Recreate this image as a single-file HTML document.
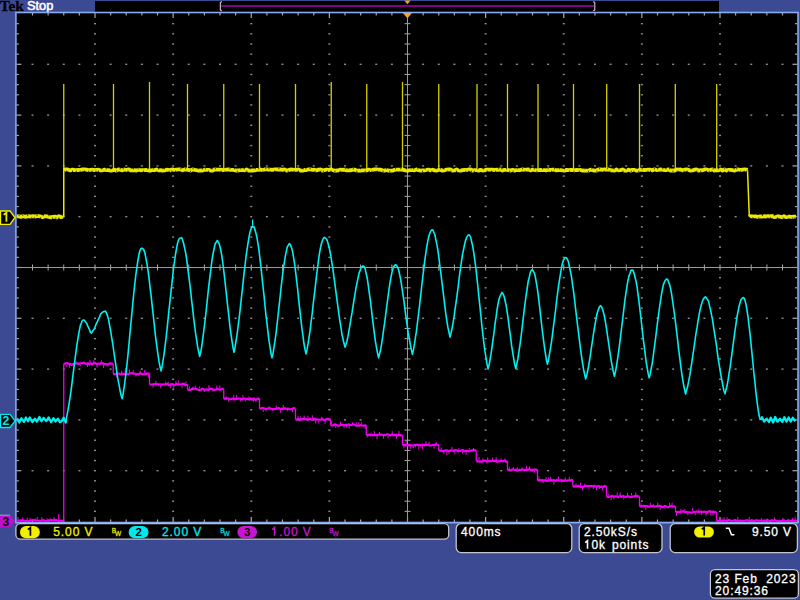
<!DOCTYPE html>
<html><head><meta charset="utf-8"><style>
html,body{margin:0;padding:0;width:800px;height:600px;overflow:hidden;background:#3c4a94;}
body{position:relative;font-family:"Liberation Sans",sans-serif;}
</style></head><body>
<svg width="800" height="600" viewBox="0 0 800 600" style="position:absolute;left:0;top:0">
<rect width="800" height="600" fill="#3c4a94"/>
<!-- top bar -->
<rect x="95" y="1" width="624" height="12" fill="#000"/>
<text x="-0.3" y="11.2" font-family="Liberation Serif" font-weight="bold" font-size="15.2" fill="#000" stroke="#000" stroke-width="0.3">Tek</text>
<text x="27" y="10.3" font-family="Liberation Sans" font-size="12.8" fill="#fff" stroke="#fff" stroke-width="0.55">Stop</text>
<rect x="221" y="5" width="373" height="2" fill="#800088"/>
<path d="M221.8 1.5 L220.3 2.5 L220.3 10 L221.8 11" fill="none" stroke="#d8c8d0" stroke-width="1.1"/>
<path d="M593.3 1.5 L594.8 2.5 L594.8 10 L593.3 11" fill="none" stroke="#d8c8d0" stroke-width="1.1"/>
<path d="M404.3 0.5 L410.5 0.5 L407.4 4.2 Z" fill="#f5a623"/>
<!-- graticule -->
<rect x="15.9" y="12.5" width="782.1" height="510" fill="#000" stroke="#88aaee" stroke-width="1.6"/>
<g fill="#8c8c8c"><rect x="94" y="22.96" width="2" height="1.4"/><rect x="94" y="33.12" width="2" height="1.4"/><rect x="94" y="43.28" width="2" height="1.4"/><rect x="94" y="53.44" width="2" height="1.4"/><rect x="94" y="63.6" width="2" height="1.4"/><rect x="94" y="73.76" width="2" height="1.4"/><rect x="94" y="83.92" width="2" height="1.4"/><rect x="94" y="94.08" width="2" height="1.4"/><rect x="94" y="104.24" width="2" height="1.4"/><rect x="94" y="114.4" width="2" height="1.4"/><rect x="94" y="124.56" width="2" height="1.4"/><rect x="94" y="134.72" width="2" height="1.4"/><rect x="94" y="144.88" width="2" height="1.4"/><rect x="94" y="155.04" width="2" height="1.4"/><rect x="94" y="165.2" width="2" height="1.4"/><rect x="94" y="175.36" width="2" height="1.4"/><rect x="94" y="185.52" width="2" height="1.4"/><rect x="94" y="195.68" width="2" height="1.4"/><rect x="94" y="205.84" width="2" height="1.4"/><rect x="94" y="216" width="2" height="1.4"/><rect x="94" y="226.16" width="2" height="1.4"/><rect x="94" y="236.32" width="2" height="1.4"/><rect x="94" y="246.48" width="2" height="1.4"/><rect x="94" y="256.64" width="2" height="1.4"/><rect x="94" y="266.8" width="2" height="1.4"/><rect x="94" y="276.96" width="2" height="1.4"/><rect x="94" y="287.12" width="2" height="1.4"/><rect x="94" y="297.28" width="2" height="1.4"/><rect x="94" y="307.44" width="2" height="1.4"/><rect x="94" y="317.6" width="2" height="1.4"/><rect x="94" y="327.76" width="2" height="1.4"/><rect x="94" y="337.92" width="2" height="1.4"/><rect x="94" y="348.08" width="2" height="1.4"/><rect x="94" y="358.24" width="2" height="1.4"/><rect x="94" y="368.4" width="2" height="1.4"/><rect x="94" y="378.56" width="2" height="1.4"/><rect x="94" y="388.72" width="2" height="1.4"/><rect x="94" y="398.88" width="2" height="1.4"/><rect x="94" y="409.04" width="2" height="1.4"/><rect x="94" y="419.2" width="2" height="1.4"/><rect x="94" y="429.36" width="2" height="1.4"/><rect x="94" y="439.52" width="2" height="1.4"/><rect x="94" y="449.68" width="2" height="1.4"/><rect x="94" y="459.84" width="2" height="1.4"/><rect x="94" y="470" width="2" height="1.4"/><rect x="94" y="480.16" width="2" height="1.4"/><rect x="94" y="490.32" width="2" height="1.4"/><rect x="94" y="500.48" width="2" height="1.4"/><rect x="94" y="510.64" width="2" height="1.4"/><rect x="172.12" y="22.96" width="2" height="1.4"/><rect x="172.12" y="33.12" width="2" height="1.4"/><rect x="172.12" y="43.28" width="2" height="1.4"/><rect x="172.12" y="53.44" width="2" height="1.4"/><rect x="172.12" y="63.6" width="2" height="1.4"/><rect x="172.12" y="73.76" width="2" height="1.4"/><rect x="172.12" y="83.92" width="2" height="1.4"/><rect x="172.12" y="94.08" width="2" height="1.4"/><rect x="172.12" y="104.24" width="2" height="1.4"/><rect x="172.12" y="114.4" width="2" height="1.4"/><rect x="172.12" y="124.56" width="2" height="1.4"/><rect x="172.12" y="134.72" width="2" height="1.4"/><rect x="172.12" y="144.88" width="2" height="1.4"/><rect x="172.12" y="155.04" width="2" height="1.4"/><rect x="172.12" y="165.2" width="2" height="1.4"/><rect x="172.12" y="175.36" width="2" height="1.4"/><rect x="172.12" y="185.52" width="2" height="1.4"/><rect x="172.12" y="195.68" width="2" height="1.4"/><rect x="172.12" y="205.84" width="2" height="1.4"/><rect x="172.12" y="216" width="2" height="1.4"/><rect x="172.12" y="226.16" width="2" height="1.4"/><rect x="172.12" y="236.32" width="2" height="1.4"/><rect x="172.12" y="246.48" width="2" height="1.4"/><rect x="172.12" y="256.64" width="2" height="1.4"/><rect x="172.12" y="266.8" width="2" height="1.4"/><rect x="172.12" y="276.96" width="2" height="1.4"/><rect x="172.12" y="287.12" width="2" height="1.4"/><rect x="172.12" y="297.28" width="2" height="1.4"/><rect x="172.12" y="307.44" width="2" height="1.4"/><rect x="172.12" y="317.6" width="2" height="1.4"/><rect x="172.12" y="327.76" width="2" height="1.4"/><rect x="172.12" y="337.92" width="2" height="1.4"/><rect x="172.12" y="348.08" width="2" height="1.4"/><rect x="172.12" y="358.24" width="2" height="1.4"/><rect x="172.12" y="368.4" width="2" height="1.4"/><rect x="172.12" y="378.56" width="2" height="1.4"/><rect x="172.12" y="388.72" width="2" height="1.4"/><rect x="172.12" y="398.88" width="2" height="1.4"/><rect x="172.12" y="409.04" width="2" height="1.4"/><rect x="172.12" y="419.2" width="2" height="1.4"/><rect x="172.12" y="429.36" width="2" height="1.4"/><rect x="172.12" y="439.52" width="2" height="1.4"/><rect x="172.12" y="449.68" width="2" height="1.4"/><rect x="172.12" y="459.84" width="2" height="1.4"/><rect x="172.12" y="470" width="2" height="1.4"/><rect x="172.12" y="480.16" width="2" height="1.4"/><rect x="172.12" y="490.32" width="2" height="1.4"/><rect x="172.12" y="500.48" width="2" height="1.4"/><rect x="172.12" y="510.64" width="2" height="1.4"/><rect x="250.25" y="22.96" width="2" height="1.4"/><rect x="250.25" y="33.12" width="2" height="1.4"/><rect x="250.25" y="43.28" width="2" height="1.4"/><rect x="250.25" y="53.44" width="2" height="1.4"/><rect x="250.25" y="63.6" width="2" height="1.4"/><rect x="250.25" y="73.76" width="2" height="1.4"/><rect x="250.25" y="83.92" width="2" height="1.4"/><rect x="250.25" y="94.08" width="2" height="1.4"/><rect x="250.25" y="104.24" width="2" height="1.4"/><rect x="250.25" y="114.4" width="2" height="1.4"/><rect x="250.25" y="124.56" width="2" height="1.4"/><rect x="250.25" y="134.72" width="2" height="1.4"/><rect x="250.25" y="144.88" width="2" height="1.4"/><rect x="250.25" y="155.04" width="2" height="1.4"/><rect x="250.25" y="165.2" width="2" height="1.4"/><rect x="250.25" y="175.36" width="2" height="1.4"/><rect x="250.25" y="185.52" width="2" height="1.4"/><rect x="250.25" y="195.68" width="2" height="1.4"/><rect x="250.25" y="205.84" width="2" height="1.4"/><rect x="250.25" y="216" width="2" height="1.4"/><rect x="250.25" y="226.16" width="2" height="1.4"/><rect x="250.25" y="236.32" width="2" height="1.4"/><rect x="250.25" y="246.48" width="2" height="1.4"/><rect x="250.25" y="256.64" width="2" height="1.4"/><rect x="250.25" y="266.8" width="2" height="1.4"/><rect x="250.25" y="276.96" width="2" height="1.4"/><rect x="250.25" y="287.12" width="2" height="1.4"/><rect x="250.25" y="297.28" width="2" height="1.4"/><rect x="250.25" y="307.44" width="2" height="1.4"/><rect x="250.25" y="317.6" width="2" height="1.4"/><rect x="250.25" y="327.76" width="2" height="1.4"/><rect x="250.25" y="337.92" width="2" height="1.4"/><rect x="250.25" y="348.08" width="2" height="1.4"/><rect x="250.25" y="358.24" width="2" height="1.4"/><rect x="250.25" y="368.4" width="2" height="1.4"/><rect x="250.25" y="378.56" width="2" height="1.4"/><rect x="250.25" y="388.72" width="2" height="1.4"/><rect x="250.25" y="398.88" width="2" height="1.4"/><rect x="250.25" y="409.04" width="2" height="1.4"/><rect x="250.25" y="419.2" width="2" height="1.4"/><rect x="250.25" y="429.36" width="2" height="1.4"/><rect x="250.25" y="439.52" width="2" height="1.4"/><rect x="250.25" y="449.68" width="2" height="1.4"/><rect x="250.25" y="459.84" width="2" height="1.4"/><rect x="250.25" y="470" width="2" height="1.4"/><rect x="250.25" y="480.16" width="2" height="1.4"/><rect x="250.25" y="490.32" width="2" height="1.4"/><rect x="250.25" y="500.48" width="2" height="1.4"/><rect x="250.25" y="510.64" width="2" height="1.4"/><rect x="328.38" y="22.96" width="2" height="1.4"/><rect x="328.38" y="33.12" width="2" height="1.4"/><rect x="328.38" y="43.28" width="2" height="1.4"/><rect x="328.38" y="53.44" width="2" height="1.4"/><rect x="328.38" y="63.6" width="2" height="1.4"/><rect x="328.38" y="73.76" width="2" height="1.4"/><rect x="328.38" y="83.92" width="2" height="1.4"/><rect x="328.38" y="94.08" width="2" height="1.4"/><rect x="328.38" y="104.24" width="2" height="1.4"/><rect x="328.38" y="114.4" width="2" height="1.4"/><rect x="328.38" y="124.56" width="2" height="1.4"/><rect x="328.38" y="134.72" width="2" height="1.4"/><rect x="328.38" y="144.88" width="2" height="1.4"/><rect x="328.38" y="155.04" width="2" height="1.4"/><rect x="328.38" y="165.2" width="2" height="1.4"/><rect x="328.38" y="175.36" width="2" height="1.4"/><rect x="328.38" y="185.52" width="2" height="1.4"/><rect x="328.38" y="195.68" width="2" height="1.4"/><rect x="328.38" y="205.84" width="2" height="1.4"/><rect x="328.38" y="216" width="2" height="1.4"/><rect x="328.38" y="226.16" width="2" height="1.4"/><rect x="328.38" y="236.32" width="2" height="1.4"/><rect x="328.38" y="246.48" width="2" height="1.4"/><rect x="328.38" y="256.64" width="2" height="1.4"/><rect x="328.38" y="266.8" width="2" height="1.4"/><rect x="328.38" y="276.96" width="2" height="1.4"/><rect x="328.38" y="287.12" width="2" height="1.4"/><rect x="328.38" y="297.28" width="2" height="1.4"/><rect x="328.38" y="307.44" width="2" height="1.4"/><rect x="328.38" y="317.6" width="2" height="1.4"/><rect x="328.38" y="327.76" width="2" height="1.4"/><rect x="328.38" y="337.92" width="2" height="1.4"/><rect x="328.38" y="348.08" width="2" height="1.4"/><rect x="328.38" y="358.24" width="2" height="1.4"/><rect x="328.38" y="368.4" width="2" height="1.4"/><rect x="328.38" y="378.56" width="2" height="1.4"/><rect x="328.38" y="388.72" width="2" height="1.4"/><rect x="328.38" y="398.88" width="2" height="1.4"/><rect x="328.38" y="409.04" width="2" height="1.4"/><rect x="328.38" y="419.2" width="2" height="1.4"/><rect x="328.38" y="429.36" width="2" height="1.4"/><rect x="328.38" y="439.52" width="2" height="1.4"/><rect x="328.38" y="449.68" width="2" height="1.4"/><rect x="328.38" y="459.84" width="2" height="1.4"/><rect x="328.38" y="470" width="2" height="1.4"/><rect x="328.38" y="480.16" width="2" height="1.4"/><rect x="328.38" y="490.32" width="2" height="1.4"/><rect x="328.38" y="500.48" width="2" height="1.4"/><rect x="328.38" y="510.64" width="2" height="1.4"/><rect x="484.62" y="22.96" width="2" height="1.4"/><rect x="484.62" y="33.12" width="2" height="1.4"/><rect x="484.62" y="43.28" width="2" height="1.4"/><rect x="484.62" y="53.44" width="2" height="1.4"/><rect x="484.62" y="63.6" width="2" height="1.4"/><rect x="484.62" y="73.76" width="2" height="1.4"/><rect x="484.62" y="83.92" width="2" height="1.4"/><rect x="484.62" y="94.08" width="2" height="1.4"/><rect x="484.62" y="104.24" width="2" height="1.4"/><rect x="484.62" y="114.4" width="2" height="1.4"/><rect x="484.62" y="124.56" width="2" height="1.4"/><rect x="484.62" y="134.72" width="2" height="1.4"/><rect x="484.62" y="144.88" width="2" height="1.4"/><rect x="484.62" y="155.04" width="2" height="1.4"/><rect x="484.62" y="165.2" width="2" height="1.4"/><rect x="484.62" y="175.36" width="2" height="1.4"/><rect x="484.62" y="185.52" width="2" height="1.4"/><rect x="484.62" y="195.68" width="2" height="1.4"/><rect x="484.62" y="205.84" width="2" height="1.4"/><rect x="484.62" y="216" width="2" height="1.4"/><rect x="484.62" y="226.16" width="2" height="1.4"/><rect x="484.62" y="236.32" width="2" height="1.4"/><rect x="484.62" y="246.48" width="2" height="1.4"/><rect x="484.62" y="256.64" width="2" height="1.4"/><rect x="484.62" y="266.8" width="2" height="1.4"/><rect x="484.62" y="276.96" width="2" height="1.4"/><rect x="484.62" y="287.12" width="2" height="1.4"/><rect x="484.62" y="297.28" width="2" height="1.4"/><rect x="484.62" y="307.44" width="2" height="1.4"/><rect x="484.62" y="317.6" width="2" height="1.4"/><rect x="484.62" y="327.76" width="2" height="1.4"/><rect x="484.62" y="337.92" width="2" height="1.4"/><rect x="484.62" y="348.08" width="2" height="1.4"/><rect x="484.62" y="358.24" width="2" height="1.4"/><rect x="484.62" y="368.4" width="2" height="1.4"/><rect x="484.62" y="378.56" width="2" height="1.4"/><rect x="484.62" y="388.72" width="2" height="1.4"/><rect x="484.62" y="398.88" width="2" height="1.4"/><rect x="484.62" y="409.04" width="2" height="1.4"/><rect x="484.62" y="419.2" width="2" height="1.4"/><rect x="484.62" y="429.36" width="2" height="1.4"/><rect x="484.62" y="439.52" width="2" height="1.4"/><rect x="484.62" y="449.68" width="2" height="1.4"/><rect x="484.62" y="459.84" width="2" height="1.4"/><rect x="484.62" y="470" width="2" height="1.4"/><rect x="484.62" y="480.16" width="2" height="1.4"/><rect x="484.62" y="490.32" width="2" height="1.4"/><rect x="484.62" y="500.48" width="2" height="1.4"/><rect x="484.62" y="510.64" width="2" height="1.4"/><rect x="562.75" y="22.96" width="2" height="1.4"/><rect x="562.75" y="33.12" width="2" height="1.4"/><rect x="562.75" y="43.28" width="2" height="1.4"/><rect x="562.75" y="53.44" width="2" height="1.4"/><rect x="562.75" y="63.6" width="2" height="1.4"/><rect x="562.75" y="73.76" width="2" height="1.4"/><rect x="562.75" y="83.92" width="2" height="1.4"/><rect x="562.75" y="94.08" width="2" height="1.4"/><rect x="562.75" y="104.24" width="2" height="1.4"/><rect x="562.75" y="114.4" width="2" height="1.4"/><rect x="562.75" y="124.56" width="2" height="1.4"/><rect x="562.75" y="134.72" width="2" height="1.4"/><rect x="562.75" y="144.88" width="2" height="1.4"/><rect x="562.75" y="155.04" width="2" height="1.4"/><rect x="562.75" y="165.2" width="2" height="1.4"/><rect x="562.75" y="175.36" width="2" height="1.4"/><rect x="562.75" y="185.52" width="2" height="1.4"/><rect x="562.75" y="195.68" width="2" height="1.4"/><rect x="562.75" y="205.84" width="2" height="1.4"/><rect x="562.75" y="216" width="2" height="1.4"/><rect x="562.75" y="226.16" width="2" height="1.4"/><rect x="562.75" y="236.32" width="2" height="1.4"/><rect x="562.75" y="246.48" width="2" height="1.4"/><rect x="562.75" y="256.64" width="2" height="1.4"/><rect x="562.75" y="266.8" width="2" height="1.4"/><rect x="562.75" y="276.96" width="2" height="1.4"/><rect x="562.75" y="287.12" width="2" height="1.4"/><rect x="562.75" y="297.28" width="2" height="1.4"/><rect x="562.75" y="307.44" width="2" height="1.4"/><rect x="562.75" y="317.6" width="2" height="1.4"/><rect x="562.75" y="327.76" width="2" height="1.4"/><rect x="562.75" y="337.92" width="2" height="1.4"/><rect x="562.75" y="348.08" width="2" height="1.4"/><rect x="562.75" y="358.24" width="2" height="1.4"/><rect x="562.75" y="368.4" width="2" height="1.4"/><rect x="562.75" y="378.56" width="2" height="1.4"/><rect x="562.75" y="388.72" width="2" height="1.4"/><rect x="562.75" y="398.88" width="2" height="1.4"/><rect x="562.75" y="409.04" width="2" height="1.4"/><rect x="562.75" y="419.2" width="2" height="1.4"/><rect x="562.75" y="429.36" width="2" height="1.4"/><rect x="562.75" y="439.52" width="2" height="1.4"/><rect x="562.75" y="449.68" width="2" height="1.4"/><rect x="562.75" y="459.84" width="2" height="1.4"/><rect x="562.75" y="470" width="2" height="1.4"/><rect x="562.75" y="480.16" width="2" height="1.4"/><rect x="562.75" y="490.32" width="2" height="1.4"/><rect x="562.75" y="500.48" width="2" height="1.4"/><rect x="562.75" y="510.64" width="2" height="1.4"/><rect x="640.88" y="22.96" width="2" height="1.4"/><rect x="640.88" y="33.12" width="2" height="1.4"/><rect x="640.88" y="43.28" width="2" height="1.4"/><rect x="640.88" y="53.44" width="2" height="1.4"/><rect x="640.88" y="63.6" width="2" height="1.4"/><rect x="640.88" y="73.76" width="2" height="1.4"/><rect x="640.88" y="83.92" width="2" height="1.4"/><rect x="640.88" y="94.08" width="2" height="1.4"/><rect x="640.88" y="104.24" width="2" height="1.4"/><rect x="640.88" y="114.4" width="2" height="1.4"/><rect x="640.88" y="124.56" width="2" height="1.4"/><rect x="640.88" y="134.72" width="2" height="1.4"/><rect x="640.88" y="144.88" width="2" height="1.4"/><rect x="640.88" y="155.04" width="2" height="1.4"/><rect x="640.88" y="165.2" width="2" height="1.4"/><rect x="640.88" y="175.36" width="2" height="1.4"/><rect x="640.88" y="185.52" width="2" height="1.4"/><rect x="640.88" y="195.68" width="2" height="1.4"/><rect x="640.88" y="205.84" width="2" height="1.4"/><rect x="640.88" y="216" width="2" height="1.4"/><rect x="640.88" y="226.16" width="2" height="1.4"/><rect x="640.88" y="236.32" width="2" height="1.4"/><rect x="640.88" y="246.48" width="2" height="1.4"/><rect x="640.88" y="256.64" width="2" height="1.4"/><rect x="640.88" y="266.8" width="2" height="1.4"/><rect x="640.88" y="276.96" width="2" height="1.4"/><rect x="640.88" y="287.12" width="2" height="1.4"/><rect x="640.88" y="297.28" width="2" height="1.4"/><rect x="640.88" y="307.44" width="2" height="1.4"/><rect x="640.88" y="317.6" width="2" height="1.4"/><rect x="640.88" y="327.76" width="2" height="1.4"/><rect x="640.88" y="337.92" width="2" height="1.4"/><rect x="640.88" y="348.08" width="2" height="1.4"/><rect x="640.88" y="358.24" width="2" height="1.4"/><rect x="640.88" y="368.4" width="2" height="1.4"/><rect x="640.88" y="378.56" width="2" height="1.4"/><rect x="640.88" y="388.72" width="2" height="1.4"/><rect x="640.88" y="398.88" width="2" height="1.4"/><rect x="640.88" y="409.04" width="2" height="1.4"/><rect x="640.88" y="419.2" width="2" height="1.4"/><rect x="640.88" y="429.36" width="2" height="1.4"/><rect x="640.88" y="439.52" width="2" height="1.4"/><rect x="640.88" y="449.68" width="2" height="1.4"/><rect x="640.88" y="459.84" width="2" height="1.4"/><rect x="640.88" y="470" width="2" height="1.4"/><rect x="640.88" y="480.16" width="2" height="1.4"/><rect x="640.88" y="490.32" width="2" height="1.4"/><rect x="640.88" y="500.48" width="2" height="1.4"/><rect x="640.88" y="510.64" width="2" height="1.4"/><rect x="719" y="22.96" width="2" height="1.4"/><rect x="719" y="33.12" width="2" height="1.4"/><rect x="719" y="43.28" width="2" height="1.4"/><rect x="719" y="53.44" width="2" height="1.4"/><rect x="719" y="63.6" width="2" height="1.4"/><rect x="719" y="73.76" width="2" height="1.4"/><rect x="719" y="83.92" width="2" height="1.4"/><rect x="719" y="94.08" width="2" height="1.4"/><rect x="719" y="104.24" width="2" height="1.4"/><rect x="719" y="114.4" width="2" height="1.4"/><rect x="719" y="124.56" width="2" height="1.4"/><rect x="719" y="134.72" width="2" height="1.4"/><rect x="719" y="144.88" width="2" height="1.4"/><rect x="719" y="155.04" width="2" height="1.4"/><rect x="719" y="165.2" width="2" height="1.4"/><rect x="719" y="175.36" width="2" height="1.4"/><rect x="719" y="185.52" width="2" height="1.4"/><rect x="719" y="195.68" width="2" height="1.4"/><rect x="719" y="205.84" width="2" height="1.4"/><rect x="719" y="216" width="2" height="1.4"/><rect x="719" y="226.16" width="2" height="1.4"/><rect x="719" y="236.32" width="2" height="1.4"/><rect x="719" y="246.48" width="2" height="1.4"/><rect x="719" y="256.64" width="2" height="1.4"/><rect x="719" y="266.8" width="2" height="1.4"/><rect x="719" y="276.96" width="2" height="1.4"/><rect x="719" y="287.12" width="2" height="1.4"/><rect x="719" y="297.28" width="2" height="1.4"/><rect x="719" y="307.44" width="2" height="1.4"/><rect x="719" y="317.6" width="2" height="1.4"/><rect x="719" y="327.76" width="2" height="1.4"/><rect x="719" y="337.92" width="2" height="1.4"/><rect x="719" y="348.08" width="2" height="1.4"/><rect x="719" y="358.24" width="2" height="1.4"/><rect x="719" y="368.4" width="2" height="1.4"/><rect x="719" y="378.56" width="2" height="1.4"/><rect x="719" y="388.72" width="2" height="1.4"/><rect x="719" y="398.88" width="2" height="1.4"/><rect x="719" y="409.04" width="2" height="1.4"/><rect x="719" y="419.2" width="2" height="1.4"/><rect x="719" y="429.36" width="2" height="1.4"/><rect x="719" y="439.52" width="2" height="1.4"/><rect x="719" y="449.68" width="2" height="1.4"/><rect x="719" y="459.84" width="2" height="1.4"/><rect x="719" y="470" width="2" height="1.4"/><rect x="719" y="480.16" width="2" height="1.4"/><rect x="719" y="490.32" width="2" height="1.4"/><rect x="719" y="500.48" width="2" height="1.4"/><rect x="719" y="510.64" width="2" height="1.4"/><rect x="31.5" y="63.6" width="2" height="1.4"/><rect x="47.12" y="63.6" width="2" height="1.4"/><rect x="62.75" y="63.6" width="2" height="1.4"/><rect x="78.38" y="63.6" width="2" height="1.4"/><rect x="109.62" y="63.6" width="2" height="1.4"/><rect x="125.25" y="63.6" width="2" height="1.4"/><rect x="140.88" y="63.6" width="2" height="1.4"/><rect x="156.5" y="63.6" width="2" height="1.4"/><rect x="187.75" y="63.6" width="2" height="1.4"/><rect x="203.38" y="63.6" width="2" height="1.4"/><rect x="219" y="63.6" width="2" height="1.4"/><rect x="234.62" y="63.6" width="2" height="1.4"/><rect x="265.88" y="63.6" width="2" height="1.4"/><rect x="281.5" y="63.6" width="2" height="1.4"/><rect x="297.12" y="63.6" width="2" height="1.4"/><rect x="312.75" y="63.6" width="2" height="1.4"/><rect x="344" y="63.6" width="2" height="1.4"/><rect x="359.62" y="63.6" width="2" height="1.4"/><rect x="375.25" y="63.6" width="2" height="1.4"/><rect x="390.88" y="63.6" width="2" height="1.4"/><rect x="422.12" y="63.6" width="2" height="1.4"/><rect x="437.75" y="63.6" width="2" height="1.4"/><rect x="453.38" y="63.6" width="2" height="1.4"/><rect x="469" y="63.6" width="2" height="1.4"/><rect x="500.25" y="63.6" width="2" height="1.4"/><rect x="515.88" y="63.6" width="2" height="1.4"/><rect x="531.5" y="63.6" width="2" height="1.4"/><rect x="547.12" y="63.6" width="2" height="1.4"/><rect x="578.38" y="63.6" width="2" height="1.4"/><rect x="594" y="63.6" width="2" height="1.4"/><rect x="609.62" y="63.6" width="2" height="1.4"/><rect x="625.25" y="63.6" width="2" height="1.4"/><rect x="656.5" y="63.6" width="2" height="1.4"/><rect x="672.12" y="63.6" width="2" height="1.4"/><rect x="687.75" y="63.6" width="2" height="1.4"/><rect x="703.38" y="63.6" width="2" height="1.4"/><rect x="734.62" y="63.6" width="2" height="1.4"/><rect x="750.25" y="63.6" width="2" height="1.4"/><rect x="765.88" y="63.6" width="2" height="1.4"/><rect x="781.5" y="63.6" width="2" height="1.4"/><rect x="31.5" y="114.4" width="2" height="1.4"/><rect x="47.12" y="114.4" width="2" height="1.4"/><rect x="62.75" y="114.4" width="2" height="1.4"/><rect x="78.38" y="114.4" width="2" height="1.4"/><rect x="109.62" y="114.4" width="2" height="1.4"/><rect x="125.25" y="114.4" width="2" height="1.4"/><rect x="140.88" y="114.4" width="2" height="1.4"/><rect x="156.5" y="114.4" width="2" height="1.4"/><rect x="187.75" y="114.4" width="2" height="1.4"/><rect x="203.38" y="114.4" width="2" height="1.4"/><rect x="219" y="114.4" width="2" height="1.4"/><rect x="234.62" y="114.4" width="2" height="1.4"/><rect x="265.88" y="114.4" width="2" height="1.4"/><rect x="281.5" y="114.4" width="2" height="1.4"/><rect x="297.12" y="114.4" width="2" height="1.4"/><rect x="312.75" y="114.4" width="2" height="1.4"/><rect x="344" y="114.4" width="2" height="1.4"/><rect x="359.62" y="114.4" width="2" height="1.4"/><rect x="375.25" y="114.4" width="2" height="1.4"/><rect x="390.88" y="114.4" width="2" height="1.4"/><rect x="422.12" y="114.4" width="2" height="1.4"/><rect x="437.75" y="114.4" width="2" height="1.4"/><rect x="453.38" y="114.4" width="2" height="1.4"/><rect x="469" y="114.4" width="2" height="1.4"/><rect x="500.25" y="114.4" width="2" height="1.4"/><rect x="515.88" y="114.4" width="2" height="1.4"/><rect x="531.5" y="114.4" width="2" height="1.4"/><rect x="547.12" y="114.4" width="2" height="1.4"/><rect x="578.38" y="114.4" width="2" height="1.4"/><rect x="594" y="114.4" width="2" height="1.4"/><rect x="609.62" y="114.4" width="2" height="1.4"/><rect x="625.25" y="114.4" width="2" height="1.4"/><rect x="656.5" y="114.4" width="2" height="1.4"/><rect x="672.12" y="114.4" width="2" height="1.4"/><rect x="687.75" y="114.4" width="2" height="1.4"/><rect x="703.38" y="114.4" width="2" height="1.4"/><rect x="734.62" y="114.4" width="2" height="1.4"/><rect x="750.25" y="114.4" width="2" height="1.4"/><rect x="765.88" y="114.4" width="2" height="1.4"/><rect x="781.5" y="114.4" width="2" height="1.4"/><rect x="31.5" y="165.2" width="2" height="1.4"/><rect x="47.12" y="165.2" width="2" height="1.4"/><rect x="62.75" y="165.2" width="2" height="1.4"/><rect x="78.38" y="165.2" width="2" height="1.4"/><rect x="109.62" y="165.2" width="2" height="1.4"/><rect x="125.25" y="165.2" width="2" height="1.4"/><rect x="140.88" y="165.2" width="2" height="1.4"/><rect x="156.5" y="165.2" width="2" height="1.4"/><rect x="187.75" y="165.2" width="2" height="1.4"/><rect x="203.38" y="165.2" width="2" height="1.4"/><rect x="219" y="165.2" width="2" height="1.4"/><rect x="234.62" y="165.2" width="2" height="1.4"/><rect x="265.88" y="165.2" width="2" height="1.4"/><rect x="281.5" y="165.2" width="2" height="1.4"/><rect x="297.12" y="165.2" width="2" height="1.4"/><rect x="312.75" y="165.2" width="2" height="1.4"/><rect x="344" y="165.2" width="2" height="1.4"/><rect x="359.62" y="165.2" width="2" height="1.4"/><rect x="375.25" y="165.2" width="2" height="1.4"/><rect x="390.88" y="165.2" width="2" height="1.4"/><rect x="422.12" y="165.2" width="2" height="1.4"/><rect x="437.75" y="165.2" width="2" height="1.4"/><rect x="453.38" y="165.2" width="2" height="1.4"/><rect x="469" y="165.2" width="2" height="1.4"/><rect x="500.25" y="165.2" width="2" height="1.4"/><rect x="515.88" y="165.2" width="2" height="1.4"/><rect x="531.5" y="165.2" width="2" height="1.4"/><rect x="547.12" y="165.2" width="2" height="1.4"/><rect x="578.38" y="165.2" width="2" height="1.4"/><rect x="594" y="165.2" width="2" height="1.4"/><rect x="609.62" y="165.2" width="2" height="1.4"/><rect x="625.25" y="165.2" width="2" height="1.4"/><rect x="656.5" y="165.2" width="2" height="1.4"/><rect x="672.12" y="165.2" width="2" height="1.4"/><rect x="687.75" y="165.2" width="2" height="1.4"/><rect x="703.38" y="165.2" width="2" height="1.4"/><rect x="734.62" y="165.2" width="2" height="1.4"/><rect x="750.25" y="165.2" width="2" height="1.4"/><rect x="765.88" y="165.2" width="2" height="1.4"/><rect x="781.5" y="165.2" width="2" height="1.4"/><rect x="31.5" y="216" width="2" height="1.4"/><rect x="47.12" y="216" width="2" height="1.4"/><rect x="62.75" y="216" width="2" height="1.4"/><rect x="78.38" y="216" width="2" height="1.4"/><rect x="109.62" y="216" width="2" height="1.4"/><rect x="125.25" y="216" width="2" height="1.4"/><rect x="140.88" y="216" width="2" height="1.4"/><rect x="156.5" y="216" width="2" height="1.4"/><rect x="187.75" y="216" width="2" height="1.4"/><rect x="203.38" y="216" width="2" height="1.4"/><rect x="219" y="216" width="2" height="1.4"/><rect x="234.62" y="216" width="2" height="1.4"/><rect x="265.88" y="216" width="2" height="1.4"/><rect x="281.5" y="216" width="2" height="1.4"/><rect x="297.12" y="216" width="2" height="1.4"/><rect x="312.75" y="216" width="2" height="1.4"/><rect x="344" y="216" width="2" height="1.4"/><rect x="359.62" y="216" width="2" height="1.4"/><rect x="375.25" y="216" width="2" height="1.4"/><rect x="390.88" y="216" width="2" height="1.4"/><rect x="422.12" y="216" width="2" height="1.4"/><rect x="437.75" y="216" width="2" height="1.4"/><rect x="453.38" y="216" width="2" height="1.4"/><rect x="469" y="216" width="2" height="1.4"/><rect x="500.25" y="216" width="2" height="1.4"/><rect x="515.88" y="216" width="2" height="1.4"/><rect x="531.5" y="216" width="2" height="1.4"/><rect x="547.12" y="216" width="2" height="1.4"/><rect x="578.38" y="216" width="2" height="1.4"/><rect x="594" y="216" width="2" height="1.4"/><rect x="609.62" y="216" width="2" height="1.4"/><rect x="625.25" y="216" width="2" height="1.4"/><rect x="656.5" y="216" width="2" height="1.4"/><rect x="672.12" y="216" width="2" height="1.4"/><rect x="687.75" y="216" width="2" height="1.4"/><rect x="703.38" y="216" width="2" height="1.4"/><rect x="734.62" y="216" width="2" height="1.4"/><rect x="750.25" y="216" width="2" height="1.4"/><rect x="765.88" y="216" width="2" height="1.4"/><rect x="781.5" y="216" width="2" height="1.4"/><rect x="31.5" y="317.6" width="2" height="1.4"/><rect x="47.12" y="317.6" width="2" height="1.4"/><rect x="62.75" y="317.6" width="2" height="1.4"/><rect x="78.38" y="317.6" width="2" height="1.4"/><rect x="109.62" y="317.6" width="2" height="1.4"/><rect x="125.25" y="317.6" width="2" height="1.4"/><rect x="140.88" y="317.6" width="2" height="1.4"/><rect x="156.5" y="317.6" width="2" height="1.4"/><rect x="187.75" y="317.6" width="2" height="1.4"/><rect x="203.38" y="317.6" width="2" height="1.4"/><rect x="219" y="317.6" width="2" height="1.4"/><rect x="234.62" y="317.6" width="2" height="1.4"/><rect x="265.88" y="317.6" width="2" height="1.4"/><rect x="281.5" y="317.6" width="2" height="1.4"/><rect x="297.12" y="317.6" width="2" height="1.4"/><rect x="312.75" y="317.6" width="2" height="1.4"/><rect x="344" y="317.6" width="2" height="1.4"/><rect x="359.62" y="317.6" width="2" height="1.4"/><rect x="375.25" y="317.6" width="2" height="1.4"/><rect x="390.88" y="317.6" width="2" height="1.4"/><rect x="422.12" y="317.6" width="2" height="1.4"/><rect x="437.75" y="317.6" width="2" height="1.4"/><rect x="453.38" y="317.6" width="2" height="1.4"/><rect x="469" y="317.6" width="2" height="1.4"/><rect x="500.25" y="317.6" width="2" height="1.4"/><rect x="515.88" y="317.6" width="2" height="1.4"/><rect x="531.5" y="317.6" width="2" height="1.4"/><rect x="547.12" y="317.6" width="2" height="1.4"/><rect x="578.38" y="317.6" width="2" height="1.4"/><rect x="594" y="317.6" width="2" height="1.4"/><rect x="609.62" y="317.6" width="2" height="1.4"/><rect x="625.25" y="317.6" width="2" height="1.4"/><rect x="656.5" y="317.6" width="2" height="1.4"/><rect x="672.12" y="317.6" width="2" height="1.4"/><rect x="687.75" y="317.6" width="2" height="1.4"/><rect x="703.38" y="317.6" width="2" height="1.4"/><rect x="734.62" y="317.6" width="2" height="1.4"/><rect x="750.25" y="317.6" width="2" height="1.4"/><rect x="765.88" y="317.6" width="2" height="1.4"/><rect x="781.5" y="317.6" width="2" height="1.4"/><rect x="31.5" y="368.4" width="2" height="1.4"/><rect x="47.12" y="368.4" width="2" height="1.4"/><rect x="62.75" y="368.4" width="2" height="1.4"/><rect x="78.38" y="368.4" width="2" height="1.4"/><rect x="109.62" y="368.4" width="2" height="1.4"/><rect x="125.25" y="368.4" width="2" height="1.4"/><rect x="140.88" y="368.4" width="2" height="1.4"/><rect x="156.5" y="368.4" width="2" height="1.4"/><rect x="187.75" y="368.4" width="2" height="1.4"/><rect x="203.38" y="368.4" width="2" height="1.4"/><rect x="219" y="368.4" width="2" height="1.4"/><rect x="234.62" y="368.4" width="2" height="1.4"/><rect x="265.88" y="368.4" width="2" height="1.4"/><rect x="281.5" y="368.4" width="2" height="1.4"/><rect x="297.12" y="368.4" width="2" height="1.4"/><rect x="312.75" y="368.4" width="2" height="1.4"/><rect x="344" y="368.4" width="2" height="1.4"/><rect x="359.62" y="368.4" width="2" height="1.4"/><rect x="375.25" y="368.4" width="2" height="1.4"/><rect x="390.88" y="368.4" width="2" height="1.4"/><rect x="422.12" y="368.4" width="2" height="1.4"/><rect x="437.75" y="368.4" width="2" height="1.4"/><rect x="453.38" y="368.4" width="2" height="1.4"/><rect x="469" y="368.4" width="2" height="1.4"/><rect x="500.25" y="368.4" width="2" height="1.4"/><rect x="515.88" y="368.4" width="2" height="1.4"/><rect x="531.5" y="368.4" width="2" height="1.4"/><rect x="547.12" y="368.4" width="2" height="1.4"/><rect x="578.38" y="368.4" width="2" height="1.4"/><rect x="594" y="368.4" width="2" height="1.4"/><rect x="609.62" y="368.4" width="2" height="1.4"/><rect x="625.25" y="368.4" width="2" height="1.4"/><rect x="656.5" y="368.4" width="2" height="1.4"/><rect x="672.12" y="368.4" width="2" height="1.4"/><rect x="687.75" y="368.4" width="2" height="1.4"/><rect x="703.38" y="368.4" width="2" height="1.4"/><rect x="734.62" y="368.4" width="2" height="1.4"/><rect x="750.25" y="368.4" width="2" height="1.4"/><rect x="765.88" y="368.4" width="2" height="1.4"/><rect x="781.5" y="368.4" width="2" height="1.4"/><rect x="31.5" y="419.2" width="2" height="1.4"/><rect x="47.12" y="419.2" width="2" height="1.4"/><rect x="62.75" y="419.2" width="2" height="1.4"/><rect x="78.38" y="419.2" width="2" height="1.4"/><rect x="109.62" y="419.2" width="2" height="1.4"/><rect x="125.25" y="419.2" width="2" height="1.4"/><rect x="140.88" y="419.2" width="2" height="1.4"/><rect x="156.5" y="419.2" width="2" height="1.4"/><rect x="187.75" y="419.2" width="2" height="1.4"/><rect x="203.38" y="419.2" width="2" height="1.4"/><rect x="219" y="419.2" width="2" height="1.4"/><rect x="234.62" y="419.2" width="2" height="1.4"/><rect x="265.88" y="419.2" width="2" height="1.4"/><rect x="281.5" y="419.2" width="2" height="1.4"/><rect x="297.12" y="419.2" width="2" height="1.4"/><rect x="312.75" y="419.2" width="2" height="1.4"/><rect x="344" y="419.2" width="2" height="1.4"/><rect x="359.62" y="419.2" width="2" height="1.4"/><rect x="375.25" y="419.2" width="2" height="1.4"/><rect x="390.88" y="419.2" width="2" height="1.4"/><rect x="422.12" y="419.2" width="2" height="1.4"/><rect x="437.75" y="419.2" width="2" height="1.4"/><rect x="453.38" y="419.2" width="2" height="1.4"/><rect x="469" y="419.2" width="2" height="1.4"/><rect x="500.25" y="419.2" width="2" height="1.4"/><rect x="515.88" y="419.2" width="2" height="1.4"/><rect x="531.5" y="419.2" width="2" height="1.4"/><rect x="547.12" y="419.2" width="2" height="1.4"/><rect x="578.38" y="419.2" width="2" height="1.4"/><rect x="594" y="419.2" width="2" height="1.4"/><rect x="609.62" y="419.2" width="2" height="1.4"/><rect x="625.25" y="419.2" width="2" height="1.4"/><rect x="656.5" y="419.2" width="2" height="1.4"/><rect x="672.12" y="419.2" width="2" height="1.4"/><rect x="687.75" y="419.2" width="2" height="1.4"/><rect x="703.38" y="419.2" width="2" height="1.4"/><rect x="734.62" y="419.2" width="2" height="1.4"/><rect x="750.25" y="419.2" width="2" height="1.4"/><rect x="765.88" y="419.2" width="2" height="1.4"/><rect x="781.5" y="419.2" width="2" height="1.4"/><rect x="31.5" y="470" width="2" height="1.4"/><rect x="47.12" y="470" width="2" height="1.4"/><rect x="62.75" y="470" width="2" height="1.4"/><rect x="78.38" y="470" width="2" height="1.4"/><rect x="109.62" y="470" width="2" height="1.4"/><rect x="125.25" y="470" width="2" height="1.4"/><rect x="140.88" y="470" width="2" height="1.4"/><rect x="156.5" y="470" width="2" height="1.4"/><rect x="187.75" y="470" width="2" height="1.4"/><rect x="203.38" y="470" width="2" height="1.4"/><rect x="219" y="470" width="2" height="1.4"/><rect x="234.62" y="470" width="2" height="1.4"/><rect x="265.88" y="470" width="2" height="1.4"/><rect x="281.5" y="470" width="2" height="1.4"/><rect x="297.12" y="470" width="2" height="1.4"/><rect x="312.75" y="470" width="2" height="1.4"/><rect x="344" y="470" width="2" height="1.4"/><rect x="359.62" y="470" width="2" height="1.4"/><rect x="375.25" y="470" width="2" height="1.4"/><rect x="390.88" y="470" width="2" height="1.4"/><rect x="422.12" y="470" width="2" height="1.4"/><rect x="437.75" y="470" width="2" height="1.4"/><rect x="453.38" y="470" width="2" height="1.4"/><rect x="469" y="470" width="2" height="1.4"/><rect x="500.25" y="470" width="2" height="1.4"/><rect x="515.88" y="470" width="2" height="1.4"/><rect x="531.5" y="470" width="2" height="1.4"/><rect x="547.12" y="470" width="2" height="1.4"/><rect x="578.38" y="470" width="2" height="1.4"/><rect x="594" y="470" width="2" height="1.4"/><rect x="609.62" y="470" width="2" height="1.4"/><rect x="625.25" y="470" width="2" height="1.4"/><rect x="656.5" y="470" width="2" height="1.4"/><rect x="672.12" y="470" width="2" height="1.4"/><rect x="687.75" y="470" width="2" height="1.4"/><rect x="703.38" y="470" width="2" height="1.4"/><rect x="734.62" y="470" width="2" height="1.4"/><rect x="750.25" y="470" width="2" height="1.4"/><rect x="765.88" y="470" width="2" height="1.4"/><rect x="781.5" y="470" width="2" height="1.4"/></g>
<g fill="#a8a8a8"><rect x="32" y="264.5" width="1" height="6"/><rect x="47.62" y="264.5" width="1" height="6"/><rect x="63.25" y="264.5" width="1" height="6"/><rect x="78.88" y="264.5" width="1" height="6"/><rect x="94.5" y="264.5" width="1" height="6"/><rect x="110.12" y="264.5" width="1" height="6"/><rect x="125.75" y="264.5" width="1" height="6"/><rect x="141.38" y="264.5" width="1" height="6"/><rect x="157" y="264.5" width="1" height="6"/><rect x="172.62" y="264.5" width="1" height="6"/><rect x="188.25" y="264.5" width="1" height="6"/><rect x="203.88" y="264.5" width="1" height="6"/><rect x="219.5" y="264.5" width="1" height="6"/><rect x="235.12" y="264.5" width="1" height="6"/><rect x="250.75" y="264.5" width="1" height="6"/><rect x="266.38" y="264.5" width="1" height="6"/><rect x="282" y="264.5" width="1" height="6"/><rect x="297.62" y="264.5" width="1" height="6"/><rect x="313.25" y="264.5" width="1" height="6"/><rect x="328.88" y="264.5" width="1" height="6"/><rect x="344.5" y="264.5" width="1" height="6"/><rect x="360.12" y="264.5" width="1" height="6"/><rect x="375.75" y="264.5" width="1" height="6"/><rect x="391.38" y="264.5" width="1" height="6"/><rect x="407" y="264.5" width="1" height="6"/><rect x="422.62" y="264.5" width="1" height="6"/><rect x="438.25" y="264.5" width="1" height="6"/><rect x="453.88" y="264.5" width="1" height="6"/><rect x="469.5" y="264.5" width="1" height="6"/><rect x="485.12" y="264.5" width="1" height="6"/><rect x="500.75" y="264.5" width="1" height="6"/><rect x="516.38" y="264.5" width="1" height="6"/><rect x="532" y="264.5" width="1" height="6"/><rect x="547.62" y="264.5" width="1" height="6"/><rect x="563.25" y="264.5" width="1" height="6"/><rect x="578.88" y="264.5" width="1" height="6"/><rect x="594.5" y="264.5" width="1" height="6"/><rect x="610.12" y="264.5" width="1" height="6"/><rect x="625.75" y="264.5" width="1" height="6"/><rect x="641.38" y="264.5" width="1" height="6"/><rect x="657" y="264.5" width="1" height="6"/><rect x="672.62" y="264.5" width="1" height="6"/><rect x="688.25" y="264.5" width="1" height="6"/><rect x="703.88" y="264.5" width="1" height="6"/><rect x="719.5" y="264.5" width="1" height="6"/><rect x="735.12" y="264.5" width="1" height="6"/><rect x="750.75" y="264.5" width="1" height="6"/><rect x="766.38" y="264.5" width="1" height="6"/><rect x="782" y="264.5" width="1" height="6"/><rect x="404.5" y="23.16" width="6" height="1"/><rect x="404.5" y="33.32" width="6" height="1"/><rect x="404.5" y="43.48" width="6" height="1"/><rect x="404.5" y="53.64" width="6" height="1"/><rect x="404.5" y="63.8" width="6" height="1"/><rect x="404.5" y="73.96" width="6" height="1"/><rect x="404.5" y="84.12" width="6" height="1"/><rect x="404.5" y="94.28" width="6" height="1"/><rect x="404.5" y="104.44" width="6" height="1"/><rect x="404.5" y="114.6" width="6" height="1"/><rect x="404.5" y="124.76" width="6" height="1"/><rect x="404.5" y="134.92" width="6" height="1"/><rect x="404.5" y="145.08" width="6" height="1"/><rect x="404.5" y="155.24" width="6" height="1"/><rect x="404.5" y="165.4" width="6" height="1"/><rect x="404.5" y="175.56" width="6" height="1"/><rect x="404.5" y="185.72" width="6" height="1"/><rect x="404.5" y="195.88" width="6" height="1"/><rect x="404.5" y="206.04" width="6" height="1"/><rect x="404.5" y="216.2" width="6" height="1"/><rect x="404.5" y="226.36" width="6" height="1"/><rect x="404.5" y="236.52" width="6" height="1"/><rect x="404.5" y="246.68" width="6" height="1"/><rect x="404.5" y="256.84" width="6" height="1"/><rect x="404.5" y="267" width="6" height="1"/><rect x="404.5" y="277.16" width="6" height="1"/><rect x="404.5" y="287.32" width="6" height="1"/><rect x="404.5" y="297.48" width="6" height="1"/><rect x="404.5" y="307.64" width="6" height="1"/><rect x="404.5" y="317.8" width="6" height="1"/><rect x="404.5" y="327.96" width="6" height="1"/><rect x="404.5" y="338.12" width="6" height="1"/><rect x="404.5" y="348.28" width="6" height="1"/><rect x="404.5" y="358.44" width="6" height="1"/><rect x="404.5" y="368.6" width="6" height="1"/><rect x="404.5" y="378.76" width="6" height="1"/><rect x="404.5" y="388.92" width="6" height="1"/><rect x="404.5" y="399.08" width="6" height="1"/><rect x="404.5" y="409.24" width="6" height="1"/><rect x="404.5" y="419.4" width="6" height="1"/><rect x="404.5" y="429.56" width="6" height="1"/><rect x="404.5" y="439.72" width="6" height="1"/><rect x="404.5" y="449.88" width="6" height="1"/><rect x="404.5" y="460.04" width="6" height="1"/><rect x="404.5" y="470.2" width="6" height="1"/><rect x="404.5" y="480.36" width="6" height="1"/><rect x="404.5" y="490.52" width="6" height="1"/><rect x="404.5" y="500.68" width="6" height="1"/><rect x="404.5" y="510.84" width="6" height="1"/><rect x="31.9" y="13" width="1.2" height="2.5"/><rect x="31.9" y="519.5" width="1.2" height="2.5"/><rect x="47.52" y="13" width="1.2" height="2.5"/><rect x="47.52" y="519.5" width="1.2" height="2.5"/><rect x="63.15" y="13" width="1.2" height="2.5"/><rect x="63.15" y="519.5" width="1.2" height="2.5"/><rect x="78.78" y="13" width="1.2" height="2.5"/><rect x="78.78" y="519.5" width="1.2" height="2.5"/><rect x="94.4" y="13" width="1.2" height="5"/><rect x="94.4" y="517" width="1.2" height="5"/><rect x="110.03" y="13" width="1.2" height="2.5"/><rect x="110.03" y="519.5" width="1.2" height="2.5"/><rect x="125.65" y="13" width="1.2" height="2.5"/><rect x="125.65" y="519.5" width="1.2" height="2.5"/><rect x="141.28" y="13" width="1.2" height="2.5"/><rect x="141.28" y="519.5" width="1.2" height="2.5"/><rect x="156.9" y="13" width="1.2" height="2.5"/><rect x="156.9" y="519.5" width="1.2" height="2.5"/><rect x="172.53" y="13" width="1.2" height="5"/><rect x="172.53" y="517" width="1.2" height="5"/><rect x="188.15" y="13" width="1.2" height="2.5"/><rect x="188.15" y="519.5" width="1.2" height="2.5"/><rect x="203.78" y="13" width="1.2" height="2.5"/><rect x="203.78" y="519.5" width="1.2" height="2.5"/><rect x="219.4" y="13" width="1.2" height="2.5"/><rect x="219.4" y="519.5" width="1.2" height="2.5"/><rect x="235.03" y="13" width="1.2" height="2.5"/><rect x="235.03" y="519.5" width="1.2" height="2.5"/><rect x="250.65" y="13" width="1.2" height="5"/><rect x="250.65" y="517" width="1.2" height="5"/><rect x="266.27" y="13" width="1.2" height="2.5"/><rect x="266.27" y="519.5" width="1.2" height="2.5"/><rect x="281.9" y="13" width="1.2" height="2.5"/><rect x="281.9" y="519.5" width="1.2" height="2.5"/><rect x="297.52" y="13" width="1.2" height="2.5"/><rect x="297.52" y="519.5" width="1.2" height="2.5"/><rect x="313.15" y="13" width="1.2" height="2.5"/><rect x="313.15" y="519.5" width="1.2" height="2.5"/><rect x="328.77" y="13" width="1.2" height="5"/><rect x="328.77" y="517" width="1.2" height="5"/><rect x="344.4" y="13" width="1.2" height="2.5"/><rect x="344.4" y="519.5" width="1.2" height="2.5"/><rect x="360.02" y="13" width="1.2" height="2.5"/><rect x="360.02" y="519.5" width="1.2" height="2.5"/><rect x="375.65" y="13" width="1.2" height="2.5"/><rect x="375.65" y="519.5" width="1.2" height="2.5"/><rect x="391.27" y="13" width="1.2" height="2.5"/><rect x="391.27" y="519.5" width="1.2" height="2.5"/><rect x="406.9" y="13" width="1.2" height="5"/><rect x="406.9" y="517" width="1.2" height="5"/><rect x="422.52" y="13" width="1.2" height="2.5"/><rect x="422.52" y="519.5" width="1.2" height="2.5"/><rect x="438.15" y="13" width="1.2" height="2.5"/><rect x="438.15" y="519.5" width="1.2" height="2.5"/><rect x="453.77" y="13" width="1.2" height="2.5"/><rect x="453.77" y="519.5" width="1.2" height="2.5"/><rect x="469.4" y="13" width="1.2" height="2.5"/><rect x="469.4" y="519.5" width="1.2" height="2.5"/><rect x="485.02" y="13" width="1.2" height="5"/><rect x="485.02" y="517" width="1.2" height="5"/><rect x="500.65" y="13" width="1.2" height="2.5"/><rect x="500.65" y="519.5" width="1.2" height="2.5"/><rect x="516.27" y="13" width="1.2" height="2.5"/><rect x="516.27" y="519.5" width="1.2" height="2.5"/><rect x="531.9" y="13" width="1.2" height="2.5"/><rect x="531.9" y="519.5" width="1.2" height="2.5"/><rect x="547.52" y="13" width="1.2" height="2.5"/><rect x="547.52" y="519.5" width="1.2" height="2.5"/><rect x="563.15" y="13" width="1.2" height="5"/><rect x="563.15" y="517" width="1.2" height="5"/><rect x="578.77" y="13" width="1.2" height="2.5"/><rect x="578.77" y="519.5" width="1.2" height="2.5"/><rect x="594.4" y="13" width="1.2" height="2.5"/><rect x="594.4" y="519.5" width="1.2" height="2.5"/><rect x="610.02" y="13" width="1.2" height="2.5"/><rect x="610.02" y="519.5" width="1.2" height="2.5"/><rect x="625.65" y="13" width="1.2" height="2.5"/><rect x="625.65" y="519.5" width="1.2" height="2.5"/><rect x="641.27" y="13" width="1.2" height="5"/><rect x="641.27" y="517" width="1.2" height="5"/><rect x="656.9" y="13" width="1.2" height="2.5"/><rect x="656.9" y="519.5" width="1.2" height="2.5"/><rect x="672.52" y="13" width="1.2" height="2.5"/><rect x="672.52" y="519.5" width="1.2" height="2.5"/><rect x="688.15" y="13" width="1.2" height="2.5"/><rect x="688.15" y="519.5" width="1.2" height="2.5"/><rect x="703.77" y="13" width="1.2" height="2.5"/><rect x="703.77" y="519.5" width="1.2" height="2.5"/><rect x="719.4" y="13" width="1.2" height="5"/><rect x="719.4" y="517" width="1.2" height="5"/><rect x="735.02" y="13" width="1.2" height="2.5"/><rect x="735.02" y="519.5" width="1.2" height="2.5"/><rect x="750.65" y="13" width="1.2" height="2.5"/><rect x="750.65" y="519.5" width="1.2" height="2.5"/><rect x="766.27" y="13" width="1.2" height="2.5"/><rect x="766.27" y="519.5" width="1.2" height="2.5"/><rect x="781.9" y="13" width="1.2" height="2.5"/><rect x="781.9" y="519.5" width="1.2" height="2.5"/><rect x="16.4" y="23.06" width="2.5" height="1.2"/><rect x="795" y="23.06" width="2.5" height="1.2"/><rect x="16.4" y="33.22" width="2.5" height="1.2"/><rect x="795" y="33.22" width="2.5" height="1.2"/><rect x="16.4" y="43.38" width="2.5" height="1.2"/><rect x="795" y="43.38" width="2.5" height="1.2"/><rect x="16.4" y="53.54" width="2.5" height="1.2"/><rect x="795" y="53.54" width="2.5" height="1.2"/><rect x="16.4" y="63.7" width="5" height="1.2"/><rect x="792.5" y="63.7" width="5" height="1.2"/><rect x="16.4" y="73.86" width="2.5" height="1.2"/><rect x="795" y="73.86" width="2.5" height="1.2"/><rect x="16.4" y="84.02" width="2.5" height="1.2"/><rect x="795" y="84.02" width="2.5" height="1.2"/><rect x="16.4" y="94.18" width="2.5" height="1.2"/><rect x="795" y="94.18" width="2.5" height="1.2"/><rect x="16.4" y="104.34" width="2.5" height="1.2"/><rect x="795" y="104.34" width="2.5" height="1.2"/><rect x="16.4" y="114.5" width="5" height="1.2"/><rect x="792.5" y="114.5" width="5" height="1.2"/><rect x="16.4" y="124.66" width="2.5" height="1.2"/><rect x="795" y="124.66" width="2.5" height="1.2"/><rect x="16.4" y="134.82" width="2.5" height="1.2"/><rect x="795" y="134.82" width="2.5" height="1.2"/><rect x="16.4" y="144.98" width="2.5" height="1.2"/><rect x="795" y="144.98" width="2.5" height="1.2"/><rect x="16.4" y="155.14" width="2.5" height="1.2"/><rect x="795" y="155.14" width="2.5" height="1.2"/><rect x="16.4" y="165.3" width="5" height="1.2"/><rect x="792.5" y="165.3" width="5" height="1.2"/><rect x="16.4" y="175.46" width="2.5" height="1.2"/><rect x="795" y="175.46" width="2.5" height="1.2"/><rect x="16.4" y="185.62" width="2.5" height="1.2"/><rect x="795" y="185.62" width="2.5" height="1.2"/><rect x="16.4" y="195.78" width="2.5" height="1.2"/><rect x="795" y="195.78" width="2.5" height="1.2"/><rect x="16.4" y="205.94" width="2.5" height="1.2"/><rect x="795" y="205.94" width="2.5" height="1.2"/><rect x="16.4" y="216.1" width="5" height="1.2"/><rect x="792.5" y="216.1" width="5" height="1.2"/><rect x="16.4" y="226.26" width="2.5" height="1.2"/><rect x="795" y="226.26" width="2.5" height="1.2"/><rect x="16.4" y="236.42" width="2.5" height="1.2"/><rect x="795" y="236.42" width="2.5" height="1.2"/><rect x="16.4" y="246.58" width="2.5" height="1.2"/><rect x="795" y="246.58" width="2.5" height="1.2"/><rect x="16.4" y="256.74" width="2.5" height="1.2"/><rect x="795" y="256.74" width="2.5" height="1.2"/><rect x="16.4" y="266.9" width="5" height="1.2"/><rect x="792.5" y="266.9" width="5" height="1.2"/><rect x="16.4" y="277.06" width="2.5" height="1.2"/><rect x="795" y="277.06" width="2.5" height="1.2"/><rect x="16.4" y="287.22" width="2.5" height="1.2"/><rect x="795" y="287.22" width="2.5" height="1.2"/><rect x="16.4" y="297.38" width="2.5" height="1.2"/><rect x="795" y="297.38" width="2.5" height="1.2"/><rect x="16.4" y="307.54" width="2.5" height="1.2"/><rect x="795" y="307.54" width="2.5" height="1.2"/><rect x="16.4" y="317.7" width="5" height="1.2"/><rect x="792.5" y="317.7" width="5" height="1.2"/><rect x="16.4" y="327.86" width="2.5" height="1.2"/><rect x="795" y="327.86" width="2.5" height="1.2"/><rect x="16.4" y="338.02" width="2.5" height="1.2"/><rect x="795" y="338.02" width="2.5" height="1.2"/><rect x="16.4" y="348.18" width="2.5" height="1.2"/><rect x="795" y="348.18" width="2.5" height="1.2"/><rect x="16.4" y="358.34" width="2.5" height="1.2"/><rect x="795" y="358.34" width="2.5" height="1.2"/><rect x="16.4" y="368.5" width="5" height="1.2"/><rect x="792.5" y="368.5" width="5" height="1.2"/><rect x="16.4" y="378.66" width="2.5" height="1.2"/><rect x="795" y="378.66" width="2.5" height="1.2"/><rect x="16.4" y="388.82" width="2.5" height="1.2"/><rect x="795" y="388.82" width="2.5" height="1.2"/><rect x="16.4" y="398.98" width="2.5" height="1.2"/><rect x="795" y="398.98" width="2.5" height="1.2"/><rect x="16.4" y="409.14" width="2.5" height="1.2"/><rect x="795" y="409.14" width="2.5" height="1.2"/><rect x="16.4" y="419.3" width="5" height="1.2"/><rect x="792.5" y="419.3" width="5" height="1.2"/><rect x="16.4" y="429.46" width="2.5" height="1.2"/><rect x="795" y="429.46" width="2.5" height="1.2"/><rect x="16.4" y="439.62" width="2.5" height="1.2"/><rect x="795" y="439.62" width="2.5" height="1.2"/><rect x="16.4" y="449.78" width="2.5" height="1.2"/><rect x="795" y="449.78" width="2.5" height="1.2"/><rect x="16.4" y="459.94" width="2.5" height="1.2"/><rect x="795" y="459.94" width="2.5" height="1.2"/><rect x="16.4" y="470.1" width="5" height="1.2"/><rect x="792.5" y="470.1" width="5" height="1.2"/><rect x="16.4" y="480.26" width="2.5" height="1.2"/><rect x="795" y="480.26" width="2.5" height="1.2"/><rect x="16.4" y="490.42" width="2.5" height="1.2"/><rect x="795" y="490.42" width="2.5" height="1.2"/><rect x="16.4" y="500.58" width="2.5" height="1.2"/><rect x="795" y="500.58" width="2.5" height="1.2"/><rect x="16.4" y="510.74" width="2.5" height="1.2"/><rect x="795" y="510.74" width="2.5" height="1.2"/></g>
<rect x="16.9" y="267" width="780.1" height="1" fill="#9a9a9a"/>
<rect x="407" y="13.5" width="1" height="508" fill="#9a9a9a"/>
<path d="M402.8 13 L412 13 L407.4 18.2 Z" fill="#f5a623"/>
<!-- traces -->
<g fill="none" stroke-linejoin="round">
<path d="M16.9 520.48 L18.9 520.6 L20.9 520.33 L22.9 520.61 L24.9 521.17 L26.9 520.79 L28.9 520.95 L30.9 520.4 L32.9 520.38 L34.9 520.36 L36.9 520.7 L38.9 520.76 L40.9 520.94 L42.9 520.05 L44.9 520.87 L46.9 521.06 L48.9 520.65 L50.9 520.06 L52.9 520.36 L54.9 520.01 L56.9 520.23 L58.9 521.11 L60.9 520.73 L62.9 520.79 L63.75 520.6M63.75 363.75 L65.25 363.68 L66.75 363.07 L68.25 363.59 L69.75 363.88 L71.25 364.36 L72.75 364.42 L74.25 363.72 L75.75 363.63 L77.25 363.19 L78.75 363.95 L80.25 363.35 L81.75 363.26 L83.25 363.07 L84.75 363.06 L86.25 364.01 L87.75 363.22 L89.25 364.4 L90.75 363.17 L92.25 364.27 L93.75 363.23 L95.25 363.07 L96.75 364.06 L98.25 363.39 L99.75 364.08 L101.25 363.31 L102.75 363.12 L104.25 364.13 L105.75 364.05 L107.25 364.25 L108.75 364.07 L110.25 363.17 L111.75 363.93 L113.25 363.75M113.25 373.75 L114.75 374.21 L116.25 373.89 L117.75 373.48 L119.25 373.65 L120.75 374.29 L122.25 373.58 L123.75 374.01 L125.25 373.89 L126.75 374.3 L128.25 374.18 L129.75 373.45 L131.25 373.05 L132.75 373.42 L134.25 373.64 L135.75 373.87 L137.25 374.19 L138.75 374.29 L140.25 373.11 L141.75 374.22 L143.25 374.19 L144.75 374.26 L146.25 373.85 L147.75 373.43 L149.5 373.75M149.5 384.5 L151 384.47 L152.5 384.63 L154 384.06 L155.5 384.07 L157 384.05 L158.5 384.78 L160 384.31 L161.5 384.59 L163 384.36 L164.5 384.52 L166 384.01 L167.5 383.86 L169 385.2 L170.5 384.32 L172 383.95 L173.5 384.69 L175 384.9 L176.5 384.02 L178 384.64 L179.5 384.28 L181 384.53 L182.5 383.83 L184 383.85 L185.5 385.19 L187.5 384.5M187.5 389.25 L189 389.9 L190.5 389.94 L192 388.86 L193.5 388.6 L195 388.91 L196.5 389.04 L198 389.81 L199.5 389.82 L201 389.72 L202.5 388.62 L204 389.65 L205.5 389.54 L207 389.46 L208.5 389.93 L210 388.63 L211.5 388.75 L213 389.61 L214.5 389.87 L216 389.5 L217.5 388.97 L219 389.38 L220.5 389.61 L222 388.7 L223.75 389.25M223.75 399 L225.25 398.5 L226.75 398.61 L228.25 398.38 L229.75 399.3 L231.25 399.07 L232.75 398.5 L234.25 399.52 L235.75 398.67 L237.25 398.88 L238.75 398.52 L240.25 398.68 L241.75 399.48 L243.25 398.77 L244.75 398.53 L246.25 398.99 L247.75 398.75 L249.25 399.56 L250.75 398.46 L252.25 399.67 L253.75 398.38 L255.25 399.55 L256.75 399.24 L258.25 398.6 L259.5 399M259.5 408.75 L261 408.33 L262.5 408.16 L264 408.17 L265.5 408.9 L267 408.74 L268.5 408.43 L270 408.34 L271.5 408.91 L273 409.04 L274.5 409.19 L276 408.87 L277.5 408.33 L279 408.14 L280.5 409.08 L282 408.62 L283.5 409.06 L285 408.13 L286.5 409.18 L288 408.52 L289.5 409.23 L291 409.26 L292.5 408.74 L294 408.07 L295.5 408.75M295.5 419.5 L297 419.55 L298.5 418.83 L300 420.15 L301.5 419.11 L303 419.06 L304.5 418.94 L306 419.15 L307.5 419.94 L309 418.84 L310.5 418.94 L312 419.78 L313.5 419.07 L315 418.82 L316.5 419.64 L318 419.61 L319.5 419.53 L321 419.78 L322.5 418.94 L324 420.02 L325.5 419.8 L327 418.86 L328.5 418.97 L330.5 419.5M330.5 425 L332 425.44 L333.5 425.49 L335 424.37 L336.5 425.02 L338 425.64 L339.5 425.61 L341 424.65 L342.5 424.89 L344 425.19 L345.5 424.81 L347 425.04 L348.5 424.4 L350 424.91 L351.5 425.01 L353 424.33 L354.5 424.5 L356 425.66 L357.5 425.39 L359 425.61 L360.5 425.19 L362 425.43 L363.5 425.54 L365 425.54 L366.25 425M366.25 435 L367.75 435.21 L369.25 434.58 L370.75 435.29 L372.25 434.95 L373.75 435.07 L375.25 435.16 L376.75 434.96 L378.25 434.73 L379.75 434.64 L381.25 434.61 L382.75 435.02 L384.25 434.84 L385.75 435.12 L387.25 434.32 L388.75 434.79 L390.25 435.51 L391.75 434.63 L393.25 435.08 L394.75 434.99 L396.25 434.7 L397.75 435.68 L399.25 434.71 L400.75 435.38 L402.5 435M402.5 445 L404 445.12 L405.5 445 L407 445.65 L408.5 445.1 L410 444.89 L411.5 445.4 L413 445.52 L414.5 445.15 L416 444.83 L417.5 444.93 L419 444.94 L420.5 445.31 L422 444.71 L423.5 444.85 L425 445.08 L426.5 444.84 L428 444.75 L429.5 445.4 L431 445.49 L432.5 445 L434 444.92 L435.5 444.56 L437 444.73 L438.75 445M438.75 450.5 L440.25 450.6 L441.75 451.03 L443.25 451.15 L444.75 450.48 L446.25 450.42 L447.75 450.67 L449.25 451.19 L450.75 450.28 L452.25 450.54 L453.75 450.94 L455.25 450.04 L456.75 450.25 L458.25 451.17 L459.75 450.96 L461.25 450.52 L462.75 449.95 L464.25 451.05 L465.75 450.77 L467.25 450.95 L468.75 451.19 L470.25 451.04 L471.75 450.39 L473.25 450.02 L474.75 450.21 L476.25 450.5M476.25 461.25 L477.75 461.28 L479.25 461.7 L480.75 461.41 L482.25 461.68 L483.75 460.64 L485.25 460.57 L486.75 461.63 L488.25 461 L489.75 461.55 L491.25 461.05 L492.75 460.79 L494.25 460.92 L495.75 460.69 L497.25 461.82 L498.75 461.37 L500.25 461.04 L501.75 461.18 L503.25 461.09 L504.75 460.63 L506.25 461.8 L507.5 461.25M507.5 470 L509 469.98 L510.5 470.41 L512 469.64 L513.5 469.54 L515 469.8 L516.5 469.56 L518 470.66 L519.5 469.71 L521 470.09 L522.5 469.46 L524 470.05 L525.5 469.84 L527 469.86 L528.5 469.39 L530 469.47 L531.5 470.46 L533 469.79 L534.5 469.64 L536 469.57 L537.5 470M537.5 480.5 L539 480.12 L540.5 480.43 L542 479.98 L543.5 480.79 L545 480.17 L546.5 481.06 L548 480.62 L549.5 480.32 L551 480.14 L552.5 480.65 L554 480.1 L555.5 481.02 L557 479.97 L558.5 480.52 L560 480.56 L561.5 480.18 L563 480.88 L564.5 480.34 L566 480.72 L567.5 480.59 L569 480.24 L570.5 480.35 L572 479.92 L572.9 480.5M572.9 486.5 L574.4 486.29 L575.9 486.68 L577.4 486.05 L578.9 485.96 L580.4 487.08 L581.9 486.83 L583.4 486.8 L584.9 485.86 L586.4 485.86 L587.9 486.03 L589.4 486.08 L590.9 486.22 L592.4 486.33 L593.9 485.85 L595.4 486.24 L596.9 486.69 L598.4 486.05 L599.9 486.98 L601.4 486.6 L602.9 486.8 L604.4 486.16 L605.9 486.41 L606.5 486.5M606.5 496.5 L608 496.96 L609.5 496.68 L611 496.43 L612.5 495.88 L614 496.78 L615.5 496.4 L617 496.52 L618.5 497.1 L620 495.98 L621.5 496.87 L623 495.86 L624.5 496.78 L626 496.93 L627.5 496.17 L629 496.56 L630.5 497.16 L632 496.69 L633.5 496.56 L635 496.15 L636.5 495.88 L638 496.3 L639.5 496.5M639.5 506.5 L641 506.3 L642.5 506.09 L644 505.88 L645.5 506.19 L647 506.08 L648.5 506.78 L650 506.43 L651.5 505.96 L653 506.25 L654.5 506.46 L656 506.31 L657.5 506.04 L659 505.9 L660.5 505.82 L662 507.19 L663.5 506.85 L665 505.92 L666.5 506.8 L668 507.17 L669.5 506.59 L671 505.95 L672.5 506.48 L674 506.41 L675.5 506.5M675.5 512 L677 512.07 L678.5 511.82 L680 512.46 L681.5 511.64 L683 511.36 L684.5 512.09 L686 512.18 L687.5 512.45 L689 512.29 L690.5 512.57 L692 512.62 L693.5 511.99 L695 512 L696.5 511.52 L698 511.72 L699.5 512.11 L701 511.41 L702.5 512.26 L704 511.53 L705.5 511.92 L707 512.66 L708.5 511.43 L710 511.36 L711.5 511.92 L713 511.57 L714.5 512.31 L716.5 512M716.5 520.8 L718 520.9 L719.5 521.43 L721 520.77 L722.5 521.01 L724 520.52 L725.5 520.58 L727 521.34 L728.5 520.14 L730 520.36 L731.5 521.05 L733 520.73 L734.5 520.22 L736 521.02 L737.5 520.62 L739 520.91 L740.5 520.68 L742 520.84 L743.5 520.89 L745 520.65 L746.5 520.26 L748 520.35 L749.5 521.35 L751 520.87 L752.5 520.26 L754 521.31 L755.5 520.45 L757 520.23 L758.5 520.84 L760 520.45 L761.5 520.78 L763 520.88 L764.5 520.42 L766 520.9 L767.5 520.26 L769 520.82 L770.5 520.92 L772 520.21 L773.5 520.67 L775 520.2 L776.5 520.72 L778 521.31 L779.5 520.87 L781 521.1 L782.5 521.16 L784 520.26 L785.5 521.49 L787 521.11 L788.5 520.24 L790 521.26 L791.5 520.65 L793 520.34 L794.5 521.44 L796 520.89 L797 520.8" stroke="#f000f0" stroke-width="2.2"/>
<path d="M63.75 520.6 V363.75M113.25 363.75 V373.75M149.5 373.75 V384.5M187.5 384.5 V389.25M223.75 389.25 V399M259.5 399 V408.75M295.5 408.75 V419.5M330.5 419.5 V425M366.25 425 V435M402.5 435 V445M438.75 445 V450.5M476.25 450.5 V461.25M507.5 461.25 V470M537.5 470 V480.5M572.9 480.5 V486.5M606.5 486.5 V496.5M639.5 496.5 V506.5M675.5 506.5 V512M716.5 512 V520.8" stroke="#f000f0" stroke-width="1.3"/>
<path d="M18 516.98 v2.82M22.45 517.55 v2.25M27.23 517.44 v2.36M30.08 517.88 v1.92M35.13 518.44 v1.36M37.28 516.97 v2.83M41.9 517.15 v2.65M47.05 518.28 v1.52M50.26 518.16 v1.64M53.98 516.93 v2.87M56.2 518.72 v1.08M58.67 514.07 v5.73M66.88 364.55 v2.42M69.64 364.55 v3.43M71.67 364.55 v1.53M76.13 361.29 v1.66M80.31 364.55 v1.83M83.77 361.33 v1.62M87.5 364.55 v2.38M89.93 359.86 v3.09M93.87 360.19 v2.76M97.02 364.55 v3.07M101.38 360.32 v2.63M103.56 364.55 v3.45M108.04 364.55 v2.16M116.8 374.55 v3.11M121.54 370.76 v2.19M125.21 369.86 v3.09M129.46 369.59 v3.36M133.28 370.09 v2.86M135.9 374.55 v2.01M140.27 370.53 v2.42M144.69 369.91 v3.04M148.43 374.55 v3.29M153.1 385.3 v2.47M155.88 380.64 v3.06M160.72 385.3 v3.03M165.61 381.69 v2.01M168.22 381.84 v1.86M170.37 385.3 v2.61M173.74 385.3 v3.39M175.94 381 v2.7M178.3 380.28 v3.42M181.99 385.3 v2.78M186 381.41 v2.29M189.47 386.44 v2.01M192.92 386.61 v1.84M195.35 385.59 v2.86M199.5 386.56 v1.89M204.28 390.05 v1.94M208.88 385.17 v3.28M212.22 390.05 v1.69M216.75 385.69 v2.76M219.77 385.3 v3.15M226.18 396.13 v2.07M228.79 399.8 v2.23M233.78 394.85 v3.35M236.65 394.91 v3.29M240.83 399.8 v2.09M242.88 395.09 v3.11M245.3 399.8 v1.5M248.88 396.33 v1.87M253.61 399.8 v1.94M256.03 399.8 v1.86M263.23 409.55 v2.45M266.03 409.55 v1.87M269.13 406.12 v1.83M272.92 409.55 v1.51M276.25 405.42 v2.53M280.4 409.55 v3.13M283.36 405.03 v2.92M287.61 409.55 v1.62M292.48 409.55 v2.49M297.98 416.2 v2.5M300.35 416.39 v2.31M304.12 415.48 v3.22M307.84 415.71 v2.99M312.32 415.32 v3.38M315.58 420.3 v3.18M318.77 420.3 v3.38M321.78 416.72 v1.98M325.09 420.3 v3.46M331.6 421.42 v2.78M335.64 425.8 v2.05M340.41 421.46 v2.74M343.97 425.8 v2.37M346.84 425.8 v2.11M349.2 425.8 v2.69M352.74 422.16 v2.04M356.34 422.4 v1.8M358.73 422.11 v2.09M361.6 422.21 v1.99M365.24 425.8 v3.18M367.73 435.8 v1.63M371.05 432.58 v1.62M374.37 431.23 v2.97M377.04 435.8 v3.42M379.5 432.03 v2.17M383.53 435.8 v2.73M387.99 435.8 v2.54M392.22 431.18 v3.02M396.58 435.8 v2.92M398.96 430.96 v3.24M403.93 445.8 v2.65M406.2 440.86 v3.34M410.73 445.8 v3.18M413.34 445.8 v2.35M415.37 445.8 v1.59M418.87 445.8 v3.34M422.48 445.8 v3.5M426.03 441.33 v2.87M429.11 441.51 v2.69M433.95 445.8 v2.85M436.25 441.95 v2.25M441.28 447.19 v2.51M443.83 451.3 v2.76M446.89 451.3 v3.49M449.02 451.3 v2.32M451.94 446.82 v2.88M454.85 451.3 v3.18M458.86 447.81 v1.89M462.52 451.3 v2.03M466.11 451.3 v3.49M469.34 447.96 v1.74M473.62 447.99 v1.71M479 457.03 v3.42M482.86 458.45 v2M487.65 457.24 v3.21M492.35 457.32 v3.13M496.16 457.03 v3.42M501 458.46 v1.99M505.16 458.51 v1.94M509.35 467.23 v1.97M513.34 467.02 v2.18M517.46 467.51 v1.69M521.97 467.44 v1.76M526.48 466.09 v3.11M529.53 466.26 v2.94M534.41 470.8 v1.92M539.03 476.5 v3.2M543.02 481.3 v1.72M546.1 477.2 v2.5M548.3 477.58 v2.12M550.68 476.77 v2.93M553.89 481.3 v3.32M558.54 476.48 v3.22M561.37 481.3 v1.56M565.36 477.5 v2.2M569.34 476.8 v2.9M575.95 483.5 v2.2M580.46 482.65 v3.05M582.58 487.3 v3.21M584.73 483.71 v1.99M589.1 487.3 v1.92M593.35 487.3 v1.67M596.53 487.3 v3M599.37 487.3 v1.68M602.65 487.3 v3.36M608.73 493.8 v1.9M611.14 497.3 v2.91M613.86 497.3 v1.98M617.19 492.33 v3.37M620.09 492.43 v3.27M623.78 497.3 v2.17M627.43 492.68 v3.02M631.43 493 v2.7M635.72 492.54 v3.16M641.07 503.11 v2.59M645.83 507.3 v2.79M650.63 502.89 v2.81M653.37 503.92 v1.78M657.7 502.52 v3.18M660.25 507.3 v2.78M665.03 507.3 v1.84M669.52 502.72 v2.98M672.08 502.55 v3.15M676.51 512.8 v3.18M680.87 508.85 v2.35M684.85 508.67 v2.53M687.87 512.8 v2.38M692.35 507.89 v3.31M695.24 512.8 v2.39M698.28 509.31 v1.89M701.25 512.8 v2.42M705.98 512.8 v3.23M710.86 512.8 v2.74M713.04 512.8 v2.85M719.82 521.6 v1.77M722 518.03 v1.97M724.04 517.31 v2.69M726.94 517.09 v2.91M731.61 521.6 v2.74M735.3 521.6 v3.34M737.8 517.01 v2.99M742.09 521.6 v2.86M744.46 521.6 v2.25M749.3 517.06 v2.94M753.12 521.6 v1.7M757.53 521.6 v1.73M761.55 517.99 v2.01M764.89 521.6 v3.18M767.23 518.46 v1.54M771.63 521.6 v1.87M774.5 517.13 v2.87M776.94 521.6 v3.25M781.01 521.6 v3.12M783.05 517.82 v2.18M786.55 521.6 v3.25M788.66 521.6 v1.86M792.7 517.71 v2.29M795.17 516.81 v3.19" stroke="#f000f0" stroke-width="1"/>
<path d="M66 420.09 L67.02 415.04 L68.05 409.67 L69.07 403.65 L70.09 397.33 L71.12 390.15 L72.14 381.94 L73.16 373.52 L74.19 365.49 L75.21 357.63 L76.24 349.93 L77.26 342.8 L78.28 336.45 L79.31 330.68 L80.33 325.54 L81.35 323.1 L82.38 320.43 L83.4 320.08 L84.4 320.24 L85.4 321.82 L86.4 322.92 L87.4 325.12 L88.4 327.4 L89.4 329.45 L90.4 332.15 L91.4 333.09 L92.4 331.54 L93.4 330.01 L94.4 328.81 L95.4 326.07 L96.4 323.42 L97.4 321.73 L98.4 319.2 L99.4 317.41 L100.4 314.38 L101.4 313.2 L102.4 312.39 L103.4 311.66 L104.4 311.5 L105.45 311.05 L106.49 313.13 L107.54 315.84 L108.59 319.89 L109.64 325.75 L110.68 331 L111.73 337.8 L112.78 344 L113.82 351.76 L114.87 358.55 L115.92 365.55 L116.96 373.15 L118.01 379.93 L119.06 384.94 L120.11 390.86 L121.15 395.45 L122.2 398.66 L123.24 393.24 L124.28 386.17 L125.33 378.36 L126.37 369.54 L127.41 360.24 L128.45 349.91 L129.49 338.51 L130.54 327.14 L131.58 316.33 L132.62 305.74 L133.66 294.54 L134.71 284.71 L135.75 275.45 L136.79 268.06 L137.83 260.88 L138.87 254.78 L139.92 250.8 L140.96 248.7 L142 248.06 L143 248.84 L144 250.19 L145 253.57 L146 258.72 L147 264.01 L148 270.48 L149 277.98 L150 286.92 L151 294.82 L152 304.13 L153 313.03 L154 322.21 L155 331.64 L156 340.3 L157 347.48 L158 354.54 L159 361.64 L160 366.56 L161 370.91 L162.03 367 L163.06 360.4 L164.09 353.87 L165.13 345.49 L166.16 337.43 L167.19 327.7 L168.22 317.69 L169.25 307.62 L170.28 298.32 L171.32 288.65 L172.35 279.56 L173.38 269.71 L174.41 262.24 L175.44 254.75 L176.47 248.79 L177.51 243.47 L178.54 240.05 L179.57 238.16 L180.6 237.91 L181.61 237.58 L182.61 239.97 L183.62 243.53 L184.62 248.08 L185.63 252.58 L186.63 258.88 L187.64 267.07 L188.64 274.97 L189.65 282.75 L190.65 290.92 L191.66 300.79 L192.66 308.93 L193.67 318.12 L194.67 325.98 L195.68 333.89 L196.68 340.09 L197.69 347.07 L198.69 351.75 L199.7 356.39 L200.74 352.06 L201.77 346.07 L202.81 338.29 L203.84 330.43 L204.88 322.02 L205.91 313 L206.95 303.35 L207.98 293.47 L209.02 284.21 L210.05 275.77 L211.09 267.6 L212.12 259.06 L213.16 253.24 L214.19 248.26 L215.23 243.57 L216.26 242.19 L217.3 240.54 L218.34 241.97 L219.39 244.45 L220.43 248.68 L221.48 253.9 L222.52 260.95 L223.56 269.14 L224.61 277.79 L225.65 287.5 L226.69 296.97 L227.74 306.7 L228.78 315.7 L229.82 325.4 L230.87 333.49 L231.91 340.49 L232.96 347.32 L234 352.34 L235 347.29 L236 341.3 L237 335.09 L238 327.27 L239 319.21 L240 310.93 L241 301.49 L242 292.64 L243 283.42 L244 273.69 L245 265.59 L246 256.62 L247 249.81 L248 243.12 L249 237.08 L250 231.94 L251 229.13 L252 226.94 L253 226.94 L254 226.68 L255 229.69 L256 233.36 L257 237.86 L258 243.95 L259 250.26 L260 259.17 L261 267.28 L262 277.08 L263 286.63 L264 295.48 L265 305.93 L266 315.58 L267 323.59 L268 332.4 L269 340.63 L270 346.79 L271 353.59 L272 357.73 L273.02 353.59 L274.05 346.88 L275.07 340.4 L276.09 333.11 L277.12 323.73 L278.14 314.75 L279.16 305.69 L280.19 296.02 L281.21 286.39 L282.24 277.67 L283.26 269.38 L284.28 262.89 L285.31 256.22 L286.33 251.34 L287.35 246.69 L288.38 245.12 L289.4 243.54 L290.44 244.88 L291.47 247.52 L292.51 251.29 L293.55 257.46 L294.59 263.93 L295.62 271.88 L296.66 281.01 L297.7 289.41 L298.74 300.12 L299.77 309.34 L300.81 318.47 L301.85 327.85 L302.89 335.38 L303.93 343.49 L304.96 349.15 L306 353.83 L307.03 349.72 L308.07 343.72 L309.1 336.85 L310.13 330.16 L311.17 321.25 L312.2 313.57 L313.23 303.94 L314.27 295.28 L315.3 286.62 L316.33 277.32 L317.37 269.05 L318.4 260.91 L319.43 253.67 L320.47 247.84 L321.5 243.25 L322.53 240.36 L323.57 238.03 L324.6 237.42 L325.62 238.42 L326.64 239.12 L327.66 241.89 L328.68 246.06 L329.7 249.87 L330.72 255.24 L331.74 261.77 L332.76 268.19 L333.78 275.68 L334.8 283.04 L335.82 291.18 L336.84 298.95 L337.86 306.16 L338.88 314.11 L339.9 321.02 L340.92 327.23 L341.94 334.23 L342.96 338.78 L343.98 343.31 L345 347.11 L346 344.55 L347 340.9 L348 336.21 L349 330.59 L350 324.78 L351 318.45 L352 312.95 L353 306.47 L354 299.86 L355 294.04 L356 287.94 L357 283.14 L358 278.08 L359 273.39 L360 270.88 L361 267.43 L362 266.53 L363 265.89 L364.04 266.49 L365.08 268.66 L366.12 273.41 L367.16 277.73 L368.2 284.79 L369.24 292.63 L370.28 299.74 L371.32 308.3 L372.36 317.43 L373.4 325.81 L374.44 334.07 L375.48 341.73 L376.52 347.57 L377.56 353.32 L378.6 357.76 L379.6 353.53 L380.6 349.7 L381.6 343.9 L382.6 337.43 L383.6 329.59 L384.6 323.18 L385.6 315.38 L386.6 307.3 L387.6 300.01 L388.6 292.37 L389.6 285.32 L390.6 279.09 L391.6 274.03 L392.6 269.58 L393.6 266.83 L394.6 265.44 L395.6 264.73 L396.65 265.6 L397.7 267.49 L398.75 270.29 L399.8 275.15 L400.85 280.58 L401.9 287.45 L402.95 294.27 L404 301.55 L405.05 309.85 L406.1 318.09 L407.15 324.85 L408.2 332.89 L409.25 338.5 L410.3 344.68 L411.35 349.66 L412.4 354.29 L413.43 349.93 L414.46 344.12 L415.49 337.13 L416.53 330.51 L417.56 321.87 L418.59 313.23 L419.62 305.1 L420.65 295.62 L421.68 286.51 L422.72 277.43 L423.75 269.1 L424.78 260.3 L425.81 253.24 L426.84 246.42 L427.87 240.96 L428.91 235.93 L429.94 232.96 L430.97 230.76 L432 229.77 L433 230.3 L434 232.73 L435 235.25 L436 240.58 L437 245.05 L438 251.22 L439 258.39 L440 267.05 L441 274.45 L442 282.53 L443 290.76 L444 299 L445 307.68 L446 315.01 L447 321.86 L448 327.92 L449 332.26 L450 337.11 L451.03 332.82 L452.07 328.45 L453.1 322.72 L454.13 316.36 L455.17 308.31 L456.2 301.74 L457.23 293.96 L458.27 286.02 L459.3 277.08 L460.33 269.48 L461.37 262.05 L462.4 255.21 L463.43 250.17 L464.47 244.99 L465.5 240.65 L466.53 237.86 L467.57 235.78 L468.6 234.74 L469.62 235.25 L470.64 237.43 L471.66 241.79 L472.68 246.03 L473.71 252.27 L474.73 259.58 L475.75 267.2 L476.77 276.34 L477.79 285.78 L478.81 296.08 L479.83 305.59 L480.85 315.42 L481.87 325.83 L482.89 334.5 L483.92 343.54 L484.94 351.14 L485.96 357.44 L486.98 363.92 L488 368.92 L489 365.35 L490 359.79 L491 354.23 L492 347.27 L493 339.58 L494 332.75 L495 324.21 L496 317.74 L497 310.17 L498 304 L499 299.32 L500 296.33 L501 294.34 L502 292.41 L503.06 293.87 L504.12 296.46 L505.18 301.01 L506.25 305.86 L507.31 312.96 L508.37 320.33 L509.43 328.95 L510.49 336.44 L511.55 345.21 L512.62 351.84 L513.68 358.34 L514.74 364.44 L515.8 368.5 L516.84 363.6 L517.88 358.73 L518.91 351.58 L519.95 345.11 L520.99 337.03 L522.02 328.71 L523.06 319.87 L524.1 310.92 L525.14 302.61 L526.17 294.76 L527.21 288.25 L528.25 281.16 L529.29 277.14 L530.32 272.44 L531.36 270.4 L532.4 269.72 L533.4 271.3 L534.4 273.26 L535.4 277.08 L536.4 283.04 L537.4 288.82 L538.4 296.62 L539.4 304.95 L540.4 313.89 L541.4 322.72 L542.4 331.28 L543.4 339.19 L544.4 346.79 L545.4 353.33 L546.4 359.87 L547.4 364.19 L548.41 360.1 L549.42 354.29 L550.43 348.63 L551.44 342.3 L552.46 334.71 L553.47 326.31 L554.48 318.54 L555.49 310.73 L556.5 301.67 L557.51 293.56 L558.52 286.06 L559.53 279.51 L560.54 273.4 L561.56 267.22 L562.57 262.91 L563.58 259.87 L564.59 258.04 L565.6 257.63 L566.6 257.79 L567.6 259.77 L568.6 262.54 L569.6 267.5 L570.6 272.24 L571.6 277.43 L572.6 285.2 L573.6 291.56 L574.6 299.82 L575.6 308.82 L576.6 317.09 L577.6 325.57 L578.6 333.66 L579.6 341.58 L580.6 349.92 L581.6 356.57 L582.6 363.34 L583.6 369.49 L584.6 374.18 L585.6 378.88 L586.6 375.82 L587.6 371.27 L588.6 365.79 L589.6 360.04 L590.6 353.41 L591.6 346.27 L592.6 339.98 L593.6 333 L594.6 327 L595.6 321.35 L596.6 315.69 L597.6 311.7 L598.6 308.83 L599.6 306.54 L600.6 305.67 L601.66 307.08 L602.72 309.68 L603.78 313.43 L604.85 318.52 L605.91 324.93 L606.97 331.73 L608.03 339.13 L609.09 346.49 L610.15 353.69 L611.22 360.94 L612.28 366.41 L613.34 371.92 L614.4 376.34 L615.44 371.8 L616.47 366.22 L617.51 359.33 L618.54 352.29 L619.58 344.41 L620.61 336.2 L621.65 327.24 L622.68 318.78 L623.72 310.45 L624.75 301.28 L625.79 294.16 L626.82 287.42 L627.86 281.03 L628.89 276.37 L629.93 273.44 L630.96 270.17 L632 270.05 L633.01 270.33 L634.02 273.26 L635.04 277.03 L636.05 281.4 L637.06 286.92 L638.07 294.52 L639.08 302.31 L640.09 310.95 L641.11 319.5 L642.12 328.6 L643.13 337.69 L644.14 345.9 L645.15 353.83 L646.16 361.86 L647.18 367.53 L648.19 373.68 L649.2 377.87 L650.22 374.16 L651.24 368.26 L652.25 363.3 L653.27 355.77 L654.29 348.01 L655.31 340.42 L656.32 332.44 L657.34 323.78 L658.36 316.2 L659.38 308.48 L660.39 301.63 L661.41 294.78 L662.43 289.14 L663.45 284.63 L664.46 281.97 L665.48 280.2 L666.5 279.03 L667.51 279.29 L668.51 281.86 L669.52 284.44 L670.52 288.42 L671.53 293.56 L672.53 300.51 L673.54 307.5 L674.54 314.89 L675.55 322.77 L676.55 331.27 L677.56 339.39 L678.56 348.76 L679.57 356.3 L680.57 364.55 L681.58 372.17 L682.58 378.93 L683.59 384.52 L684.59 389.48 L685.6 394.06 L686.64 389.95 L687.68 386.44 L688.73 380.79 L689.77 375.69 L690.81 368.74 L691.85 362.2 L692.89 355.07 L693.94 348.12 L694.98 340.65 L696.02 333.35 L697.06 327.4 L698.11 320.47 L699.15 314.55 L700.19 309.42 L701.23 305.21 L702.27 301.61 L703.32 299.27 L704.36 297.72 L705.4 296.83 L706.43 298.04 L707.46 299.53 L708.49 301.16 L709.53 305.63 L710.56 310.15 L711.59 315.2 L712.62 320.3 L713.65 327.54 L714.68 334.11 L715.72 340.44 L716.75 347.63 L717.78 355.91 L718.81 362.54 L719.84 368.72 L720.87 374.79 L721.91 380.54 L722.94 385.72 L723.97 390.73 L725 393.82 L726 389.78 L727 386.03 L728 380.47 L729 373.61 L730 367.79 L731 360.32 L732 353.11 L733 345.42 L734 338.17 L735 330.73 L736 323.86 L737 316.7 L738 311.6 L739 306.55 L740 302.89 L741 299.66 L742 298.45 L743 297.47 L744 297.95 L745 300.4 L746 304.35 L747 310.3 L748 316.63 L749 325.09 L750 333.59 L751 343.58 L752 353.57 L753 363.78 L754 374.23 L755 382.93 L756 393.09 L757 401.03 L758 408.58 L759 415.05 L760.4 420" stroke="#00f0f0" stroke-width="1.6"/>
<path d="M16.9 418.34 L19.3 422.42 L21.37 418.31 L23.94 421.91 L25.94 417.51 L28 421.3 L29.8 417.44 L32.33 421.94 L34.89 418.76 L36.88 421.66 L39.44 417.08 L41.55 421.25 L43.69 417.91 L46.24 421.13 L48.68 417.47 L51.14 422.19 L53.42 418.21 L55.48 421.45 L57.9 418.66 L59.86 422.16 L61.86 420.92 L63.69 417.81 L65.75 422.56 L66 420M760.4 420 L762 417.29 L764.1 421.55 L766.67 418.66 L768.98 421.95 L770.8 417.7 L773.15 422.48 L775.21 417.03 L777.42 421.67 L779.94 418.74 L782.31 421.93 L784.38 417.25 L786.48 421.65 L788.7 417.41 L790.67 421.58 L792.8 417.8 L795.26 421.33" stroke="#00f0f0" stroke-width="2.3"/>
<path d="M252.6 227 V219.5" stroke="#00f0f0" stroke-width="1.2"/>
<g stroke="#d4d000" stroke-width="1.3"><line x1="63.75" y1="170" x2="63.75" y2="84"/><line x1="113.5" y1="170" x2="113.5" y2="84"/><line x1="149.5" y1="170" x2="149.5" y2="82"/><line x1="187.5" y1="170" x2="187.5" y2="84"/><line x1="223.75" y1="170" x2="223.75" y2="84"/><line x1="259.5" y1="170" x2="259.5" y2="84"/><line x1="295.5" y1="170" x2="295.5" y2="84"/><line x1="331.25" y1="170" x2="331.25" y2="82"/><line x1="366.75" y1="170" x2="366.75" y2="84"/><line x1="402.5" y1="170" x2="402.5" y2="82"/><line x1="438.75" y1="170" x2="438.75" y2="84"/><line x1="477" y1="170" x2="477" y2="84"/><line x1="507.5" y1="170" x2="507.5" y2="84"/><line x1="538" y1="170" x2="538" y2="84"/><line x1="573.5" y1="170" x2="573.5" y2="84"/><line x1="606.7" y1="170" x2="606.7" y2="84"/><line x1="639.5" y1="170" x2="639.5" y2="84"/><line x1="675.3" y1="170" x2="675.3" y2="84"/><line x1="716.7" y1="170" x2="716.7" y2="84"/></g>
<path d="M16.9 216.45 L18.9 216.21 L20.9 216.91 L22.9 216.1 L24.9 216.75 L26.9 216.51 L28.9 216.08 L30.9 216.71 L32.9 216.05 L34.9 216.61 L36.9 216.1 L38.9 216.13 L40.9 216.59 L42.9 217.16 L44.9 216.17 L46.9 216.31 L48.9 216.88 L50.9 217.33 L52.9 216.81 L54.9 216.56 L56.9 217.37 L58.9 216.07 L60.9 217.2 L62.9 216.41 L63.75 216.7M63.75 170 L64.5 169.5 L66.5 169.46 L68.5 169.73 L70.5 170.44 L72.5 169.55 L74.5 170.11 L76.5 170.19 L78.5 169.82 L80.5 170.07 L82.5 169.39 L84.5 169.38 L86.5 169.59 L88.5 170.25 L90.5 169.9 L92.5 169.74 L94.5 170.12 L96.5 169.93 L98.5 169.72 L100.5 170.41 L102.5 170.28 L104.5 169.64 L106.5 170.1 L108.5 170.04 L110.5 170.53 L112.5 170.32 L114.5 169.7 L116.5 170.67 L118.5 169.47 L120.5 169.89 L122.5 170.36 L124.5 169.51 L126.5 169.98 L128.5 169.35 L130.5 170.24 L132.5 170.37 L134.5 170.1 L136.5 170.53 L138.5 169.74 L140.5 170.27 L142.5 170.13 L144.5 170.11 L146.5 169.94 L148.5 170.48 L150.5 170.62 L152.5 169.96 L154.5 170.23 L156.5 169.38 L158.5 170.28 L160.5 170.21 L162.5 170.69 L164.5 170.45 L166.5 169.7 L168.5 169.84 L170.5 170.24 L172.5 169.33 L174.5 169.95 L176.5 169.54 L178.5 169.46 L180.5 169.38 L182.5 170.38 L184.5 169.48 L186.5 169.65 L188.5 169.85 L190.5 170.52 L192.5 169.41 L194.5 169.93 L196.5 170.07 L198.5 170.54 L200.5 170.45 L202.5 170.51 L204.5 169.69 L206.5 169.88 L208.5 169.8 L210.5 170.54 L212.5 170.64 L214.5 169.51 L216.5 169.55 L218.5 169.62 L220.5 169.63 L222.5 169.98 L224.5 170.12 L226.5 169.67 L228.5 169.31 L230.5 169.89 L232.5 169.82 L234.5 170.09 L236.5 170.63 L238.5 170.27 L240.5 170.02 L242.5 170.16 L244.5 170.25 L246.5 169.38 L248.5 170.56 L250.5 170.39 L252.5 170.52 L254.5 170.42 L256.5 169.85 L258.5 169.86 L260.5 169.44 L262.5 170.19 L264.5 169.39 L266.5 169.39 L268.5 169.59 L270.5 169.53 L272.5 169.78 L274.5 169.37 L276.5 169.3 L278.5 169.51 L280.5 169.44 L282.5 169.81 L284.5 169.34 L286.5 170.52 L288.5 170.16 L290.5 169.51 L292.5 169.65 L294.5 169.79 L296.5 169.81 L298.5 169.47 L300.5 170.49 L302.5 170.69 L304.5 169.95 L306.5 169.98 L308.5 169.42 L310.5 169.44 L312.5 169.78 L314.5 169.67 L316.5 170.46 L318.5 169.53 L320.5 169.33 L322.5 170.63 L324.5 170.04 L326.5 169.51 L328.5 170.06 L330.5 169.34 L332.5 170.04 L334.5 170.67 L336.5 170.51 L338.5 170.27 L340.5 169.67 L342.5 169.81 L344.5 169.53 L346.5 170.38 L348.5 170.05 L350.5 170.39 L352.5 169.76 L354.5 169.61 L356.5 170.44 L358.5 170.68 L360.5 170.49 L362.5 170.43 L364.5 170.45 L366.5 170.34 L368.5 169.62 L370.5 170.02 L372.5 169.8 L374.5 169.34 L376.5 169.34 L378.5 169.69 L380.5 169.66 L382.5 170.27 L384.5 170.64 L386.5 169.93 L388.5 170.61 L390.5 170.68 L392.5 170.64 L394.5 169.81 L396.5 169.61 L398.5 169.62 L400.5 169.58 L402.5 169.59 L404.5 170.17 L406.5 170.56 L408.5 170.48 L410.5 169.97 L412.5 170.21 L414.5 170.42 L416.5 169.42 L418.5 170.22 L420.5 170.57 L422.5 170.4 L424.5 170.35 L426.5 169.97 L428.5 169.55 L430.5 170.4 L432.5 169.77 L434.5 170.42 L436.5 170.66 L438.5 169.85 L440.5 169.86 L442.5 170.63 L444.5 170.31 L446.5 169.54 L448.5 169.48 L450.5 169.51 L452.5 170.57 L454.5 170.43 L456.5 169.5 L458.5 170.46 L460.5 170.67 L462.5 170.22 L464.5 169.79 L466.5 170.07 L468.5 169.48 L470.5 169.32 L472.5 170.66 L474.5 170.21 L476.5 170.04 L478.5 170.61 L480.5 169.91 L482.5 170.52 L484.5 170.46 L486.5 169.6 L488.5 169.65 L490.5 169.71 L492.5 169.64 L494.5 170.12 L496.5 169.66 L498.5 169.89 L500.5 169.48 L502.5 170.57 L504.5 169.8 L506.5 169.94 L508.5 170.12 L510.5 170.57 L512.5 169.89 L514.5 170.58 L516.5 170 L518.5 170.04 L520.5 170.03 L522.5 169.33 L524.5 169.92 L526.5 169.56 L528.5 169.31 L530.5 170.42 L532.5 169.54 L534.5 169.96 L536.5 170.32 L538.5 170.08 L540.5 169.76 L542.5 170.03 L544.5 170.08 L546.5 170.4 L548.5 169.45 L550.5 170.08 L552.5 169.65 L554.5 169.69 L556.5 170.38 L558.5 170.01 L560.5 170.09 L562.5 170.36 L564.5 170.58 L566.5 169.92 L568.5 170.16 L570.5 170.01 L572.5 170.02 L574.5 170.27 L576.5 169.93 L578.5 170.05 L580.5 169.97 L582.5 170.62 L584.5 170.28 L586.5 170.53 L588.5 170.62 L590.5 169.66 L592.5 170.08 L594.5 170.62 L596.5 170.48 L598.5 169.49 L600.5 169.47 L602.5 169.92 L604.5 169.4 L606.5 169.64 L608.5 169.4 L610.5 170.24 L612.5 170.4 L614.5 170.56 L616.5 169.52 L618.5 170.3 L620.5 170.22 L622.5 169.5 L624.5 170.54 L626.5 170.65 L628.5 169.61 L630.5 170.63 L632.5 169.86 L634.5 169.98 L636.5 170.69 L638.5 170.47 L640.5 169.53 L642.5 169.9 L644.5 170.02 L646.5 169.77 L648.5 169.57 L650.5 169.75 L652.5 170.31 L654.5 169.33 L656.5 170.08 L658.5 169.92 L660.5 169.33 L662.5 169.76 L664.5 170.17 L666.5 170.02 L668.5 169.39 L670.5 170.68 L672.5 170.4 L674.5 170.66 L676.5 169.45 L678.5 169.67 L680.5 169.36 L682.5 170.39 L684.5 169.68 L686.5 169.48 L688.5 169.89 L690.5 170.58 L692.5 170.45 L694.5 169.66 L696.5 169.51 L698.5 170.59 L700.5 170.1 L702.5 170.28 L704.5 169.43 L706.5 169.38 L708.5 170.26 L710.5 169.9 L712.5 169.4 L714.5 170.61 L716.5 170.19 L718.5 170.42 L720.5 169.42 L722.5 170.5 L724.5 169.39 L726.5 170.51 L728.5 169.94 L730.5 169.77 L732.5 170.07 L734.5 170.6 L736.5 169.68 L738.5 169.48 L740.5 170.04 L742.5 169.63 L744.5 169.45 L746.5 169.53 L747.5 170M749.3 216.7 L750 216.07 L752 216.28 L754 216.44 L756 216.43 L758 217.06 L760 216.41 L762 216.7 L764 216.25 L766 216.49 L768 216.03 L770 216.35 L772 216.02 L774 217.03 L776 216.77 L778 216.27 L780 216.66 L782 217.31 L784 216.15 L786 217.15 L788 216.61 L790 216.69 L792 217.17 L794 216.55 L796 216.71" stroke="#eaea00" stroke-width="3.8" stroke-linecap="butt"/>
<path d="M63.75 216.7 V170 M747.5 170 L749.3 216.7" stroke="#eaea00" stroke-width="1.5"/>
<path d="M19.06 214.5 v1.6M22.76 214.5 v1.6M27.74 214.5 v1.6M31.65 217.3 v1.6M34.34 217.3 v1.6M37.09 214.5 v1.6M40.49 217.3 v1.6M43.28 214.5 v1.6M48.83 214.5 v1.6M52.31 217.3 v1.6M55.84 217.3 v1.6M58.89 217.3 v1.6M62.31 214.5 v1.6M66.64 170.6 v1.6M72.52 170.6 v1.6M76.27 170.6 v1.6M80.1 170.6 v1.6M84.36 170.6 v1.6M88.63 170.6 v1.6M92.06 170.6 v1.6M95.95 170.6 v1.6M98.53 170.6 v1.6M101.85 167.8 v1.6M106.2 167.8 v1.6M111 167.8 v1.6M116.58 170.6 v1.6M120.22 167.8 v1.6M123.24 167.8 v1.6M127.99 170.6 v1.6M133.42 167.8 v1.6M138.11 167.8 v1.6M143.46 170.6 v1.6M147.79 167.8 v1.6M153.21 167.8 v1.6M158.6 167.8 v1.6M164.23 167.8 v1.6M169.16 170.6 v1.6M171.76 170.6 v1.6M175.53 170.6 v1.6M180.95 167.8 v1.6M185.65 167.8 v1.6M190.53 170.6 v1.6M193.04 167.8 v1.6M198.16 167.8 v1.6M202.54 167.8 v1.6M205.27 167.8 v1.6M208.65 170.6 v1.6M212.08 167.8 v1.6M215.3 167.8 v1.6M221.21 170.6 v1.6M225.05 170.6 v1.6M229.94 167.8 v1.6M234.6 167.8 v1.6M237.37 170.6 v1.6M240.76 167.8 v1.6M244.33 167.8 v1.6M246.87 170.6 v1.6M250.31 167.8 v1.6M255.24 167.8 v1.6M258.75 167.8 v1.6M262.88 170.6 v1.6M265.79 167.8 v1.6M268.99 167.8 v1.6M274.77 170.6 v1.6M278.88 167.8 v1.6M284.76 170.6 v1.6M288.2 170.6 v1.6M294.01 170.6 v1.6M298.55 170.6 v1.6M302.88 167.8 v1.6M305.85 167.8 v1.6M310.13 167.8 v1.6M315.09 170.6 v1.6M320.73 170.6 v1.6M323.32 170.6 v1.6M327.54 170.6 v1.6M331.1 170.6 v1.6M334.8 170.6 v1.6M340.24 170.6 v1.6M345.37 167.8 v1.6M348.29 167.8 v1.6M353.28 167.8 v1.6M356.8 170.6 v1.6M360.67 167.8 v1.6M365.24 170.6 v1.6M369.23 170.6 v1.6M371.9 170.6 v1.6M377.32 170.6 v1.6M383.1 170.6 v1.6M386.53 167.8 v1.6M389.69 170.6 v1.6M395.54 167.8 v1.6M400.88 167.8 v1.6M406.58 167.8 v1.6M411 167.8 v1.6M413.67 167.8 v1.6M417.75 167.8 v1.6M422.51 170.6 v1.6M425.18 167.8 v1.6M428.12 170.6 v1.6M431.83 170.6 v1.6M436.91 167.8 v1.6M440.32 167.8 v1.6M443.88 167.8 v1.6M447.76 170.6 v1.6M450.82 170.6 v1.6M456.49 170.6 v1.6M459.76 167.8 v1.6M465.75 170.6 v1.6M468.74 170.6 v1.6M471.56 170.6 v1.6M474.38 170.6 v1.6M477.78 167.8 v1.6M483.39 167.8 v1.6M487.33 170.6 v1.6M491.67 170.6 v1.6M495.35 170.6 v1.6M498.82 167.8 v1.6M501.76 167.8 v1.6M506.47 167.8 v1.6M509.72 170.6 v1.6M513.09 170.6 v1.6M517.15 167.8 v1.6M522.62 167.8 v1.6M525.2 170.6 v1.6M530.18 167.8 v1.6M534.34 167.8 v1.6M536.84 170.6 v1.6M542.58 167.8 v1.6M548.08 167.8 v1.6M551.45 170.6 v1.6M554.49 167.8 v1.6M559.37 167.8 v1.6M564.4 167.8 v1.6M569.58 170.6 v1.6M574.01 170.6 v1.6M579.25 170.6 v1.6M584.96 167.8 v1.6M588.53 170.6 v1.6M591.91 167.8 v1.6M596.85 170.6 v1.6M599.6 167.8 v1.6M604.14 170.6 v1.6M607.42 167.8 v1.6M609.96 170.6 v1.6M614.07 167.8 v1.6M618.83 167.8 v1.6M622.99 170.6 v1.6M626.36 167.8 v1.6M631.32 170.6 v1.6M633.9 170.6 v1.6M638.76 170.6 v1.6M642.16 167.8 v1.6M647.9 170.6 v1.6M650.52 170.6 v1.6M654.49 167.8 v1.6M657.68 167.8 v1.6M662.77 167.8 v1.6M665.99 167.8 v1.6M669.58 167.8 v1.6M672.89 170.6 v1.6M678.05 170.6 v1.6M683.88 170.6 v1.6M687.04 170.6 v1.6M691 167.8 v1.6M696.82 170.6 v1.6M700.69 170.6 v1.6M706.6 170.6 v1.6M709.28 170.6 v1.6M713.16 167.8 v1.6M718.75 167.8 v1.6M724.74 167.8 v1.6M728.4 170.6 v1.6M734.17 167.8 v1.6M736.78 167.8 v1.6M740.61 170.6 v1.6M744.27 170.6 v1.6M746.78 170.6 v1.6M752.87 217.3 v1.6M758.74 217.3 v1.6M762.49 214.5 v1.6M767.87 217.3 v1.6M770.54 217.3 v1.6M774.34 214.5 v1.6M777.52 217.3 v1.6M783.16 217.3 v1.6M787.1 214.5 v1.6M792.28 217.3 v1.6M794.9 217.3 v1.6" stroke="#000" stroke-width="0.9" stroke-opacity="0.75"/>
</g>

<!-- bottom panel -->
<g stroke="#c4c4cc" stroke-width="1.3" fill="#000">
<rect x="15.9" y="523.6" width="432.8" height="15.6" rx="4.5"/>
<rect x="456.2" y="523.6" width="115.6" height="29" rx="5"/>
<rect x="579.2" y="523.6" width="82.8" height="29" rx="5"/>
<rect x="670.2" y="523.6" width="127.2" height="29" rx="5"/>
<rect x="710.4" y="569.6" width="88" height="28.6" rx="4.5"/>
</g>
<line x1="15.9" y1="522.6" x2="798" y2="522.6" stroke="#88aaee" stroke-width="1.4"/>
<g font-family="Liberation Sans" font-size="12">
<rect x="20" y="526" width="19.8" height="12.3" rx="6.15" fill="#f0f000"/>
<path d="M27.9 529.6 L30.4 527.6 L30.4 535.8" fill="none" stroke="#000" stroke-width="1.7"/>
<text x="53.3" y="535.8" fill="#f0f000" stroke="#f0f000" stroke-width="0.3" letter-spacing="0.9">5.00 V</text>
<rect x="128.7" y="526" width="19.8" height="12.3" rx="6.15" fill="#00e8ec"/>
<text x="138.6" y="536.2" text-anchor="middle" fill="#000" font-weight="bold" font-size="11.5">2</text>
<text x="162" y="535.8" fill="#00e8ec" stroke="#00e8ec" stroke-width="0.3" letter-spacing="0.9">2.00 V</text>
<rect x="237.3" y="526" width="19.8" height="12.2" rx="6.1" fill="#c814d2"/>
<text x="247.2" y="536.2" text-anchor="middle" fill="#000" font-weight="bold" font-size="11.5">3</text>
<path d="M272.3 529.6 L274.6 527.6 L274.6 535.8" fill="none" stroke="#c814d2" stroke-width="1.6"/>
<text x="279.2" y="535.8" fill="#c814d2" stroke="#c814d2" stroke-width="0.3" letter-spacing="0.9">.00 V</text>
<text x="461" y="535.9" fill="#fff" stroke="#fff" stroke-width="0.3" letter-spacing="0.9">400ms</text>
<text x="583.9" y="535.9" fill="#fff" stroke="#fff" stroke-width="0.3" letter-spacing="0.9">2.50kS/s</text>
<path d="M585.2 542.6 L587.5 540.7 L587.5 548.8" fill="none" stroke="#fff" stroke-width="1.6"/>
<text x="591.4" y="548.8" fill="#fff" stroke="#fff" stroke-width="0.3" letter-spacing="0.9" word-spacing="1.8">0k points</text>
<rect x="694.1" y="526.4" width="19.8" height="11.2" rx="5.6" fill="#f0f000"/>
<path d="M701.8 529.3 L704.2 527.5 L704.2 535.5" fill="none" stroke="#000" stroke-width="1.7"/>
<path d="M725.8 528.3 L729 528.3 L731.5 534.8 L734.4 534.8" fill="none" stroke="#fff" stroke-width="1.5"/>
<text x="751.9" y="535.9" fill="#fff" stroke="#fff" stroke-width="0.3" letter-spacing="0.9">9.50 V</text>
<text x="715" y="582.8" fill="#fff" stroke="#fff" stroke-width="0.3" letter-spacing="0.9" xml:space="preserve">23 Feb  2023</text>
<text x="715" y="595" fill="#fff" stroke="#fff" stroke-width="0.3" letter-spacing="0.9">20:49:36</text>
</g>
<g font-family="Liberation Sans" font-size="6.5" stroke-width="0.35">
<text x="111.8" y="532.8" fill="#d8d800" stroke="#d8d800">B</text><text x="115" y="536.3" fill="#d8d800" stroke="#d8d800">W</text>
<text x="220.3" y="532.8" fill="#00c8c8" stroke="#00c8c8">B</text><text x="223.5" y="536.3" fill="#00c8c8" stroke="#00c8c8">W</text>
<text x="329.2" y="532.8" fill="#b010c0" stroke="#b010c0">B</text><text x="332.4" y="536.3" fill="#b010c0" stroke="#b010c0">W</text>
</g>
<!-- channel markers -->
<path d="M0.5 211 L10 211 L15 217.5 L10 224.3 L0.5 224.3 Z" fill="#000" stroke="#f0f000" stroke-width="1.3"/>
<path d="M3.6 214.8 L6.4 212.8 L6.4 221.8" fill="none" stroke="#eaea00" stroke-width="1.8"/>
<path d="M0.5 414.3 L10 414.3 L15 420.8 L10 427.5 L0.5 427.5 Z" fill="#000" stroke="#00e8ec" stroke-width="1.3"/>
<text x="2.6" y="425.2" font-family="Liberation Sans" font-weight="bold" font-size="12.3" fill="#00e8ec">2</text>
<path d="M0 515.3 L10 515.3 L15 521.3 L10 527.3 L0 527.3 Z" fill="#c010cc"/>
<path d="M0 515.2 L10 515.2" stroke="#a8c0e0" stroke-width="0.8"/>
<text x="2.5" y="525.7" font-family="Liberation Sans" font-weight="bold" font-size="12" fill="#000">3</text>
</svg>
</body></html>
